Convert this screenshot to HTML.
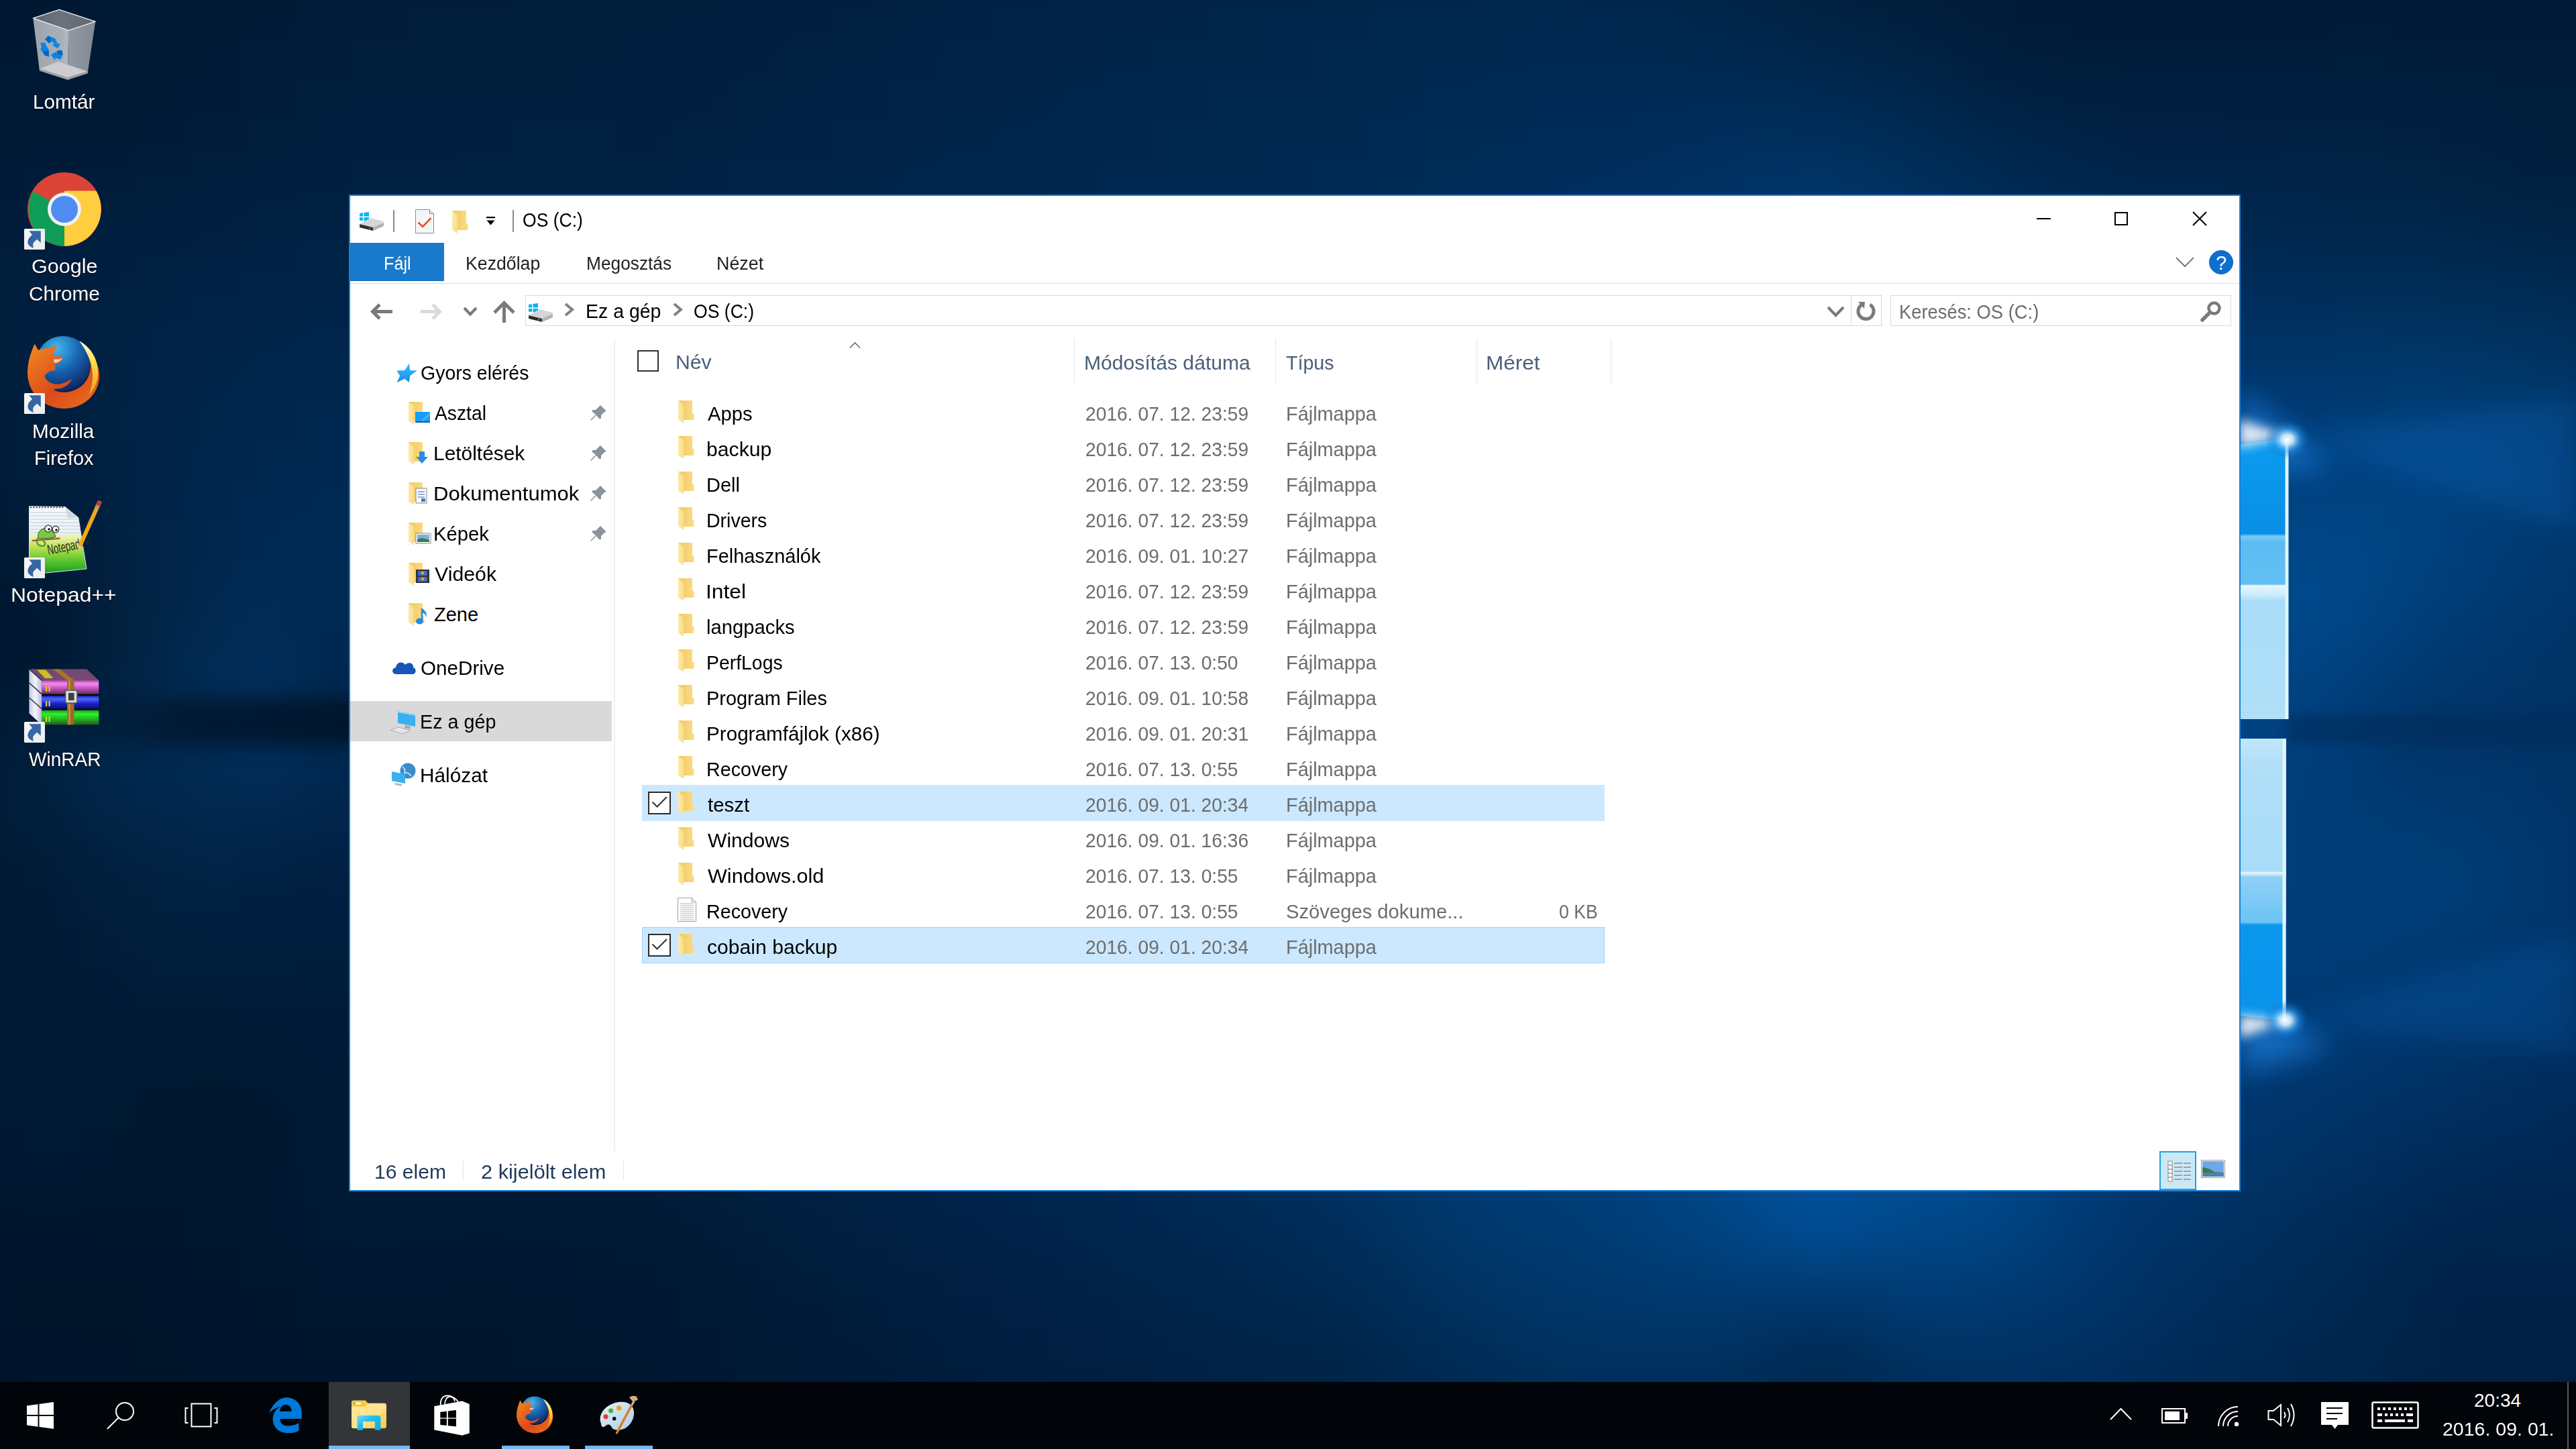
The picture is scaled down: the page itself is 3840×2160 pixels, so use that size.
<!DOCTYPE html><html><head><meta charset="utf-8"><style>html,body{margin:0;padding:0;width:3840px;height:2160px;overflow:hidden;}body{position:relative;background:#012550;font-family:"Liberation Sans", sans-serif;}.t{position:absolute;white-space:nowrap;font-family:"Liberation Sans",sans-serif;}svg{overflow:visible}</style></head><body>
<div style="position:absolute;left:-80px;top:-60px;width:4000px;height:2180px;filter:blur(30px)"><div style="position:absolute;left:0px;top:0px;width:4000px;height:60px;background:linear-gradient(90deg,#001731 0px,#001832 80px,#001832 160px,#001933 240px,#001934 320px,#001a35 400px,#001a36 480px,#001b37 560px,#001b38 640px,#001c38 720px,#001c39 800px,#001d3a 880px,#001d3a 960px,#001d3b 1040px,#001e3c 1120px,#001e3d 1200px,#001f3f 1280px,#001f40 1360px,#002041 1440px,#002042 1520px,#002143 1600px,#002244 1680px,#002245 1760px,#002346 1840px,#002447 1920px,#002448 2000px,#002549 2080px,#00254b 2160px,#00264c 2240px,#00264d 2320px,#00264d 2400px,#00264b 2480px,#002549 2560px,#002347 2640px,#002243 2720px,#001f3e 2800px,#001e3b 2880px,#001c39 2960px,#001b37 3040px,#001a36 3120px,#001936 3200px,#001936 3280px,#001936 3360px,#001936 3440px,#001a37 3520px,#001a37 3600px,#001a37 3680px,#001a37 3760px,#001a37 3840px,#001a37 3920px,#001a37 4000px)"></div><div style="position:absolute;left:0px;top:60px;width:4000px;height:60px;background:linear-gradient(90deg,#001832 0px,#001832 80px,#001933 160px,#001934 240px,#001935 320px,#001a36 400px,#001b37 480px,#001c38 560px,#001c39 640px,#001d3a 720px,#001d3a 800px,#001d3b 880px,#001d3b 960px,#001e3c 1040px,#001e3d 1120px,#001f3f 1200px,#001f40 1280px,#002041 1360px,#002043 1440px,#002144 1520px,#002245 1600px,#002246 1680px,#002347 1760px,#002448 1840px,#002549 1920px,#00254a 2000px,#00264b 2080px,#00274d 2160px,#00274e 2240px,#00284f 2320px,#002850 2400px,#00274f 2480px,#00274d 2560px,#00264b 2640px,#002448 2720px,#002243 2800px,#002040 2880px,#001e3d 2960px,#001c3a 3040px,#001b38 3120px,#001b38 3200px,#001b38 3280px,#001b39 3360px,#001b39 3440px,#001b39 3520px,#001b39 3600px,#001b39 3680px,#001b39 3760px,#001b39 3840px,#001b39 3920px,#001b39 4000px)"></div><div style="position:absolute;left:0px;top:120px;width:4000px;height:60px;background:linear-gradient(90deg,#001833 0px,#001933 80px,#001934 160px,#001934 240px,#001a35 320px,#001b37 400px,#001c39 480px,#001c3a 560px,#001d3b 640px,#001d3b 720px,#001e3c 800px,#001e3c 880px,#001e3d 960px,#001e3e 1040px,#001f3f 1120px,#001f40 1200px,#002042 1280px,#002143 1360px,#002144 1440px,#002245 1520px,#002247 1600px,#002348 1680px,#002449 1760px,#00254a 1840px,#00264b 1920px,#00264c 2000px,#00274d 2080px,#00284f 2160px,#002850 2240px,#002952 2320px,#002952 2400px,#002952 2480px,#002952 2560px,#002851 2640px,#00274e 2720px,#00264b 2800px,#002447 2880px,#002243 2960px,#001e3e 3040px,#001d3b 3120px,#001c3c 3200px,#001c3c 3280px,#001c3c 3360px,#001c3c 3440px,#001c3c 3520px,#001d3c 3600px,#001c3c 3680px,#001c3b 3760px,#001c3a 3840px,#001c3a 3920px,#001c3a 4000px)"></div><div style="position:absolute;left:0px;top:180px;width:4000px;height:60px;background:linear-gradient(90deg,#001934 0px,#001935 80px,#001a35 160px,#001a35 240px,#001a36 320px,#001b38 400px,#001c3a 480px,#001d3c 560px,#001e3d 640px,#001e3d 720px,#001f3e 800px,#001f3e 880px,#001f3e 960px,#001f3f 1040px,#001f40 1120px,#002042 1200px,#002143 1280px,#002145 1360px,#002246 1440px,#002347 1520px,#002348 1600px,#00244a 1680px,#00254b 1760px,#00264c 1840px,#00274d 1920px,#00274e 2000px,#00284f 2080px,#002951 2160px,#002a53 2240px,#002a54 2320px,#002a55 2400px,#002a55 2480px,#002b56 2560px,#002b57 2640px,#002b56 2720px,#002a54 2800px,#002850 2880px,#00264b 2960px,#002245 3040px,#002041 3120px,#001f40 3200px,#001e40 3280px,#001e3f 3360px,#001e3f 3440px,#001e3f 3520px,#001e3f 3600px,#001e3e 3680px,#001e3d 3760px,#001d3c 3840px,#001d3b 3920px,#001d3c 4000px)"></div><div style="position:absolute;left:0px;top:240px;width:4000px;height:60px;background:linear-gradient(90deg,#001935 0px,#001a36 80px,#001a37 160px,#001a37 240px,#001b38 320px,#001c3a 400px,#001d3c 480px,#001e3e 560px,#001f3f 640px,#001f3f 720px,#001f40 800px,#002040 880px,#002040 960px,#001f40 1040px,#002042 1120px,#002143 1200px,#002145 1280px,#002246 1360px,#002348 1440px,#002449 1520px,#00244a 1600px,#00254c 1680px,#00264d 1760px,#00274e 1840px,#00284f 1920px,#002850 2000px,#002951 2080px,#002a53 2160px,#002b55 2240px,#002b57 2320px,#002c58 2400px,#002c59 2480px,#002d5b 2560px,#002e5d 2640px,#002f5e 2720px,#002f5d 2800px,#002d58 2880px,#002a53 2960px,#00274d 3040px,#002449 3120px,#002246 3200px,#002044 3280px,#002044 3360px,#002043 3440px,#002143 3520px,#002142 3600px,#002041 3680px,#001f40 3760px,#001e3d 3840px,#001e3d 3920px,#001e3e 4000px)"></div><div style="position:absolute;left:0px;top:300px;width:4000px;height:60px;background:linear-gradient(90deg,#001a36 0px,#001b38 80px,#001c39 160px,#001c3a 240px,#001d3b 320px,#001e3d 400px,#001f3f 480px,#001f40 560px,#002041 640px,#002042 720px,#002042 800px,#002142 880px,#002142 960px,#002042 1040px,#002143 1120px,#002245 1200px,#002247 1280px,#002348 1360px,#00244a 1440px,#00254b 1520px,#00254c 1600px,#00264e 1680px,#00274f 1760px,#002850 1840px,#002951 1920px,#002952 2000px,#002a52 2080px,#002b55 2160px,#002c57 2240px,#002d59 2320px,#002d5b 2400px,#002e5d 2480px,#002f5f 2560px,#003162 2640px,#003265 2720px,#003366 2800px,#003160 2880px,#002e5b 2960px,#002b55 3040px,#002750 3120px,#00254c 3200px,#002349 3280px,#002349 3360px,#002348 3440px,#002348 3520px,#002346 3600px,#002345 3680px,#002243 3760px,#002040 3840px,#00203f 3920px,#002041 4000px)"></div><div style="position:absolute;left:0px;top:360px;width:4000px;height:60px;background:linear-gradient(90deg,#001b37 0px,#001c3a 80px,#001d3c 160px,#001e3d 240px,#001e3e 320px,#001f40 400px,#002042 480px,#002143 560px,#002144 640px,#002144 720px,#002245 800px,#002245 880px,#002245 960px,#002245 1040px,#002246 1120px,#002347 1200px,#002449 1280px,#00244a 1360px,#00254c 1440px,#00264d 1520px,#00264e 1600px,#002750 1680px,#002851 1760px,#002952 1840px,#002a53 1920px,#002b54 2000px,#002b55 2080px,#002c57 2160px,#002d5a 2240px,#002e5c 2320px,#002f5e 2400px,#003060 2480px,#003163 2560px,#003366 2640px,#003468 2720px,#003569 2800px,#003365 2880px,#003160 2960px,#002e5b 3040px,#002b57 3120px,#002953 3200px,#002751 3280px,#00274f 3360px,#00274e 3440px,#00264d 3520px,#00264b 3600px,#00264b 3680px,#002549 3760px,#002345 3840px,#002344 3920px,#002345 4000px)"></div><div style="position:absolute;left:0px;top:420px;width:4000px;height:60px;background:linear-gradient(90deg,#001b38 0px,#001d3b 80px,#001e3f 160px,#001f40 240px,#002041 320px,#002043 400px,#002144 480px,#002246 560px,#002246 640px,#002347 720px,#002347 800px,#002347 880px,#002348 960px,#002348 1040px,#002349 1120px,#00244a 1200px,#00254b 1280px,#00254d 1360px,#00264e 1440px,#00274f 1520px,#002751 1600px,#002852 1680px,#002953 1760px,#002a54 1840px,#002b55 1920px,#002c57 2000px,#002d58 2080px,#002d5a 2160px,#002e5c 2240px,#002f5f 2320px,#003061 2400px,#003263 2480px,#003366 2560px,#003468 2640px,#00356a 2720px,#00366a 2800px,#003568 2880px,#003364 2960px,#003161 3040px,#002e5d 3120px,#002c5a 3200px,#002b58 3280px,#002b57 3360px,#002a55 3440px,#002a53 3520px,#002a51 3600px,#002a52 3680px,#002950 3760px,#00284e 3840px,#00274c 3920px,#00264b 4000px)"></div><div style="position:absolute;left:0px;top:480px;width:4000px;height:60px;background:linear-gradient(90deg,#001b39 0px,#001d3c 80px,#001f3f 160px,#002041 240px,#002143 320px,#002245 400px,#002347 480px,#002348 560px,#002449 640px,#002449 720px,#00244a 800px,#00244a 880px,#00244a 960px,#00254b 1040px,#00254c 1120px,#00254d 1200px,#00264e 1280px,#00274f 1360px,#002750 1440px,#002851 1520px,#002953 1600px,#002954 1680px,#002a55 1760px,#002b57 1840px,#002c58 1920px,#002d59 2000px,#002e5b 2080px,#002f5d 2160px,#00305f 2240px,#003161 2320px,#003263 2400px,#003366 2480px,#003468 2560px,#00356a 2640px,#00366c 2720px,#00366c 2800px,#00366a 2880px,#003568 2960px,#003365 3040px,#003163 3120px,#003061 3200px,#002f5f 3280px,#002f5e 3360px,#002e5d 3440px,#002e5c 3520px,#002e5a 3600px,#002f5a 3680px,#002e59 3760px,#002d57 3840px,#002c54 3920px,#002a52 4000px)"></div><div style="position:absolute;left:0px;top:540px;width:4000px;height:60px;background:linear-gradient(90deg,#001b38 0px,#001d3c 80px,#001f3f 160px,#002042 240px,#002245 320px,#002347 400px,#002449 480px,#00244a 560px,#00254b 640px,#00254c 720px,#00254c 800px,#00254c 880px,#00264d 960px,#00264d 1040px,#00264e 1120px,#00274f 1200px,#002750 1280px,#002851 1360px,#002852 1440px,#002953 1520px,#002a55 1600px,#002a56 1680px,#002b57 1760px,#002c59 1840px,#002d5a 1920px,#002e5c 2000px,#002f5d 2080px,#00305f 2160px,#003161 2240px,#003263 2320px,#003366 2400px,#003468 2480px,#00356a 2560px,#00366c 2640px,#00376d 2720px,#00376d 2800px,#00376c 2880px,#00366b 2960px,#003569 3040px,#003468 3120px,#003467 3200px,#003366 3280px,#003366 3360px,#003365 3440px,#003365 3520px,#003465 3600px,#003464 3680px,#003363 3760px,#003260 3840px,#00305d 3920px,#002e59 4000px)"></div><div style="position:absolute;left:0px;top:600px;width:4000px;height:60px;background:linear-gradient(90deg,#001b38 0px,#001d3b 80px,#001f3f 160px,#002142 240px,#002246 320px,#002449 400px,#00254b 480px,#00264d 560px,#00264d 640px,#00264e 720px,#00264e 800px,#00274f 880px,#00274f 960px,#002750 1040px,#002851 1120px,#002851 1200px,#002852 1280px,#002953 1360px,#002954 1440px,#002a55 1520px,#002a57 1600px,#002b58 1680px,#002c59 1760px,#002d5b 1840px,#002e5c 1920px,#002f5e 2000px,#003060 2080px,#003162 2160px,#003263 2240px,#003365 2320px,#003468 2400px,#00356a 2480px,#00366c 2560px,#00376d 2640px,#00386e 2720px,#00386f 2800px,#00386e 2880px,#00386e 2960px,#00376d 3040px,#00376d 3120px,#00376c 3200px,#00376c 3280px,#00376d 3360px,#00376e 3440px,#00376e 3520px,#00386e 3600px,#00396d 3680px,#00386c 3760px,#00376a 3840px,#003465 3920px,#00315f 4000px)"></div><div style="position:absolute;left:0px;top:660px;width:4000px;height:60px;background:linear-gradient(90deg,#001b37 0px,#001c3a 80px,#001e3e 160px,#002142 240px,#002346 320px,#00254a 400px,#00264d 480px,#00274f 560px,#00274f 640px,#002750 720px,#002750 800px,#002851 880px,#002851 960px,#002852 1040px,#002953 1120px,#002953 1200px,#002954 1280px,#002a55 1360px,#002a56 1440px,#002b57 1520px,#002b59 1600px,#002c5a 1680px,#002d5b 1760px,#002e5d 1840px,#002f5f 1920px,#003060 2000px,#003062 2080px,#003164 2160px,#003366 2240px,#003467 2320px,#003569 2400px,#00366b 2480px,#00376d 2560px,#00386f 2640px,#003870 2720px,#003970 2800px,#003970 2880px,#003970 2960px,#003971 3040px,#003971 3120px,#003a72 3200px,#003a72 3280px,#003b74 3360px,#003b75 3440px,#003c76 3520px,#003d76 3600px,#003d76 3680px,#003c74 3760px,#003a70 3840px,#00376a 3920px,#003363 4000px)"></div><div style="position:absolute;left:0px;top:720px;width:4000px;height:60px;background:linear-gradient(90deg,#001a36 0px,#001c39 80px,#001e3d 160px,#002042 240px,#002347 320px,#00254b 400px,#00274f 480px,#002851 560px,#002851 640px,#002851 720px,#002852 800px,#002852 880px,#002953 960px,#002954 1040px,#002a55 1120px,#002a55 1200px,#002a56 1280px,#002a57 1360px,#002b58 1440px,#002b59 1520px,#002c5a 1600px,#002d5c 1680px,#002e5d 1760px,#002e5f 1840px,#002f61 1920px,#003062 2000px,#003164 2080px,#003266 2160px,#003367 2240px,#003469 2320px,#00356b 2400px,#00376d 2480px,#00376e 2560px,#003870 2640px,#003971 2720px,#003a72 2800px,#003a72 2880px,#003a73 2960px,#003b74 3040px,#003c75 3120px,#003c76 3200px,#003d78 3280px,#003e7a 3360px,#003f7b 3440px,#00407d 3520px,#00407d 3600px,#00407d 3680px,#003f7a 3760px,#003c73 3840px,#00386d 3920px,#003466 4000px)"></div><div style="position:absolute;left:0px;top:780px;width:4000px;height:60px;background:linear-gradient(90deg,#001a34 0px,#001b37 80px,#001d3b 160px,#002041 240px,#002347 320px,#00264d 400px,#002851 480px,#002953 560px,#002953 640px,#002853 720px,#002853 800px,#002953 880px,#002954 960px,#002a55 1040px,#002a56 1120px,#002b56 1200px,#002b57 1280px,#002b58 1360px,#002c59 1440px,#002c5a 1520px,#002d5c 1600px,#002e5d 1680px,#002e5f 1760px,#002f61 1840px,#003062 1920px,#003164 2000px,#003266 2080px,#003367 2160px,#003469 2240px,#00356b 2320px,#00366c 2400px,#00376e 2480px,#003870 2560px,#003971 2640px,#003a72 2720px,#003a73 2800px,#003b74 2880px,#003c75 2960px,#003d77 3040px,#003d78 3120px,#003e7a 3200px,#00407c 3280px,#00417f 3360px,#004281 3440px,#004382 3520px,#004382 3600px,#004280 3680px,#00407b 3760px,#003c74 3840px,#00386d 3920px,#003467 4000px)"></div><div style="position:absolute;left:0px;top:840px;width:4000px;height:60px;background:linear-gradient(90deg,#001933 0px,#001a35 80px,#001c39 160px,#00203f 240px,#012447 320px,#01274e 400px,#002953 480px,#002a55 560px,#002954 640px,#002953 720px,#002953 800px,#002954 880px,#002a55 960px,#002a56 1040px,#002b57 1120px,#002b57 1200px,#002b58 1280px,#002c59 1360px,#002c5a 1440px,#002d5c 1520px,#002d5d 1600px,#002e5f 1680px,#002f61 1760px,#003062 1840px,#003164 1920px,#003266 2000px,#003367 2080px,#003469 2160px,#00356b 2240px,#00366c 2320px,#00376e 2400px,#00386f 2480px,#003971 2560px,#003a72 2640px,#003a74 2720px,#003b75 2800px,#003c76 2880px,#003d78 2960px,#003e79 3040px,#003f7b 3120px,#00407d 3200px,#004280 3280px,#004383 3360px,#004586 3440px,#004688 3520px,#004585 3600px,#004280 3680px,#003e7a 3760px,#003b73 3840px,#00376c 3920px,#003467 4000px)"></div><div style="position:absolute;left:0px;top:900px;width:4000px;height:60px;background:linear-gradient(90deg,#001831 0px,#001933 80px,#001b36 160px,#011f3e 240px,#012447 320px,#012850 400px,#012a54 480px,#002a54 560px,#002953 640px,#002953 720px,#002953 800px,#002954 880px,#002a55 960px,#002a56 1040px,#002b57 1120px,#002b58 1200px,#002c59 1280px,#002c5a 1360px,#002d5b 1440px,#002d5d 1520px,#002e5e 1600px,#002f60 1680px,#003062 1760px,#003064 1840px,#003166 1920px,#003267 2000px,#003369 2080px,#00346a 2160px,#00356c 2240px,#00366d 2320px,#00376f 2400px,#003870 2480px,#003972 2560px,#003a73 2640px,#003b75 2720px,#003c76 2800px,#003d78 2880px,#003e79 2960px,#003f7b 3040px,#00407d 3120px,#004280 3200px,#004382 3280px,#004585 3360px,#004789 3440px,#00498c 3520px,#004586 3600px,#00417e 3680px,#003d77 3760px,#003970 3840px,#00366b 3920px,#003366 4000px)"></div><div style="position:absolute;left:0px;top:960px;width:4000px;height:60px;background:linear-gradient(90deg,#001830 0px,#001831 80px,#001933 160px,#011f3c 240px,#012548 320px,#022a52 400px,#022c56 480px,#002953 560px,#002852 640px,#002852 720px,#002853 800px,#002954 880px,#002955 960px,#002a56 1040px,#002b57 1120px,#002b58 1200px,#002c59 1280px,#002c5b 1360px,#002d5c 1440px,#002e5e 1520px,#002e5f 1600px,#002f61 1680px,#003063 1760px,#003165 1840px,#003267 1920px,#003369 2000px,#00346a 2080px,#00356c 2160px,#00366d 2240px,#00376e 2320px,#003870 2400px,#003971 2480px,#003a73 2560px,#003b74 2640px,#003c76 2720px,#003d77 2800px,#003e79 2880px,#003f7b 2960px,#00407d 3040px,#00417f 3120px,#004281 3200px,#004484 3280px,#004586 3360px,#004789 3440px,#00488b 3520px,#004483 3600px,#003e7a 3680px,#003a72 3760px,#00376d 3840px,#003468 3920px,#003365 4000px)"></div><div style="position:absolute;left:0px;top:1020px;width:4000px;height:60px;background:linear-gradient(90deg,#001831 0px,#001831 80px,#001831 160px,#011f3d 240px,#01264a 320px,#022c55 400px,#03305c 480px,#00274f 560px,#002751 640px,#002851 720px,#002852 800px,#002853 880px,#002954 960px,#002a55 1040px,#002b57 1120px,#002b58 1200px,#002c5a 1280px,#002d5b 1360px,#002d5d 1440px,#002e5e 1520px,#002f60 1600px,#002f62 1680px,#003064 1760px,#003166 1840px,#003268 1920px,#00336a 2000px,#00346b 2080px,#00356c 2160px,#00366e 2240px,#00376f 2320px,#003870 2400px,#003972 2480px,#003a73 2560px,#003b75 2640px,#003c77 2720px,#003d78 2800px,#003e7a 2880px,#003f7c 2960px,#00417e 3040px,#004280 3120px,#004382 3200px,#004484 3280px,#004586 3360px,#004586 3440px,#004484 3520px,#00407d 3600px,#003b74 3680px,#00376e 3760px,#003569 3840px,#003366 3920px,#003263 4000px)"></div><div style="position:absolute;left:0px;top:1080px;width:4000px;height:60px;background:linear-gradient(90deg,#001831 0px,#001a34 80px,#001c38 160px,#012243 240px,#02284e 320px,#022c56 400px,#022d58 480px,#002851 560px,#002750 640px,#002750 720px,#002751 800px,#002852 880px,#002953 960px,#002955 1040px,#002a56 1120px,#002b58 1200px,#002c5a 1280px,#002d5b 1360px,#002d5d 1440px,#002e5e 1520px,#002f60 1600px,#003062 1680px,#003064 1760px,#003166 1840px,#003268 1920px,#00336a 2000px,#00346c 2080px,#00366d 2160px,#00376e 2240px,#003770 2320px,#003871 2400px,#003972 2480px,#003a74 2560px,#003b75 2640px,#003c77 2720px,#003e79 2800px,#003f7b 2880px,#00407d 2960px,#00417f 3040px,#004281 3120px,#004383 3200px,#004484 3280px,#004484 3360px,#004383 3440px,#00417f 3520px,#003c76 3600px,#00376c 3680px,#00356a 3760px,#003467 3840px,#003265 3920px,#003163 4000px)"></div><div style="position:absolute;left:0px;top:1140px;width:4000px;height:60px;background:linear-gradient(90deg,#001933 0px,#001b37 80px,#00203f 160px,#01264b 240px,#022950 320px,#022c56 400px,#022d59 480px,#012953 560px,#002750 640px,#00264f 720px,#00274f 800px,#002751 880px,#002852 960px,#002954 1040px,#002a56 1120px,#002b58 1200px,#002c59 1280px,#002d5b 1360px,#002d5d 1440px,#002e5e 1520px,#002f60 1600px,#003062 1680px,#003164 1760px,#003266 1840px,#003368 1920px,#00346a 2000px,#00356c 2080px,#00366d 2160px,#00376f 2240px,#003870 2320px,#003971 2400px,#003a73 2480px,#003a74 2560px,#003b76 2640px,#003d78 2720px,#003e7a 2800px,#003f7c 2880px,#00407e 2960px,#004180 3040px,#004281 3120px,#004383 3200px,#004383 3280px,#004382 3360px,#004280 3440px,#003f7b 3520px,#003a73 3600px,#003467 3680px,#003569 3760px,#003468 3840px,#003365 3920px,#003163 4000px)"></div><div style="position:absolute;left:0px;top:1200px;width:4000px;height:60px;background:linear-gradient(90deg,#001a34 0px,#001c38 80px,#002141 160px,#01274c 240px,#01284f 320px,#022a53 400px,#022c56 480px,#012850 560px,#00264d 640px,#00254d 720px,#00264e 800px,#00274f 880px,#002751 960px,#002953 1040px,#002a55 1120px,#002b57 1200px,#002c59 1280px,#002d5b 1360px,#002d5d 1440px,#002e5e 1520px,#002f60 1600px,#003062 1680px,#003164 1760px,#003266 1840px,#003368 1920px,#00346a 2000px,#00356c 2080px,#00366e 2160px,#00376f 2240px,#003870 2320px,#003972 2400px,#003a73 2480px,#003b74 2560px,#003c76 2640px,#003d78 2720px,#003e7a 2800px,#003f7c 2880px,#00417f 2960px,#004280 3040px,#004282 3120px,#004382 3200px,#004382 3280px,#004281 3360px,#00417f 3440px,#003e7a 3520px,#003b74 3600px,#00386e 3680px,#00376c 3760px,#00356a 3840px,#003367 3920px,#003163 4000px)"></div><div style="position:absolute;left:0px;top:1260px;width:4000px;height:60px;background:linear-gradient(90deg,#001a34 0px,#001c38 80px,#001f3d 160px,#012345 240px,#01264a 320px,#01274c 400px,#01264d 480px,#01244a 560px,#002449 640px,#00244a 720px,#00254b 800px,#00264d 880px,#00274f 960px,#002852 1040px,#002954 1120px,#002a56 1200px,#002b59 1280px,#002c5a 1360px,#002d5c 1440px,#002e5e 1520px,#002f60 1600px,#002f61 1680px,#003063 1760px,#003166 1840px,#003368 1920px,#00346a 2000px,#00356c 2080px,#00366e 2160px,#00376f 2240px,#003871 2320px,#003972 2400px,#003a73 2480px,#003b74 2560px,#003b75 2640px,#003d78 2720px,#003e7a 2800px,#00407d 2880px,#00417f 2960px,#004281 3040px,#004282 3120px,#004382 3200px,#004282 3280px,#004180 3360px,#00407e 3440px,#003e7a 3520px,#003c76 3600px,#003b74 3680px,#003a71 3760px,#00376c 3840px,#003468 3920px,#003264 4000px)"></div><div style="position:absolute;left:0px;top:1320px;width:4000px;height:60px;background:linear-gradient(90deg,#001933 0px,#001b36 80px,#001c38 160px,#00203f 240px,#012244 320px,#012346 400px,#002245 480px,#002042 560px,#002145 640px,#002247 720px,#002349 800px,#00254b 880px,#00264d 960px,#002750 1040px,#002953 1120px,#002a56 1200px,#002b58 1280px,#002c5a 1360px,#002d5c 1440px,#002d5d 1520px,#002e5f 1600px,#002f61 1680px,#003063 1760px,#003165 1840px,#003267 1920px,#003469 2000px,#00356c 2080px,#00366e 2160px,#00376f 2240px,#003871 2320px,#003972 2400px,#003a73 2480px,#003a74 2560px,#003b75 2640px,#003d77 2720px,#003e7a 2800px,#00407e 2880px,#004180 2960px,#004282 3040px,#004382 3120px,#004282 3200px,#004281 3280px,#00417f 3360px,#00407d 3440px,#003e7a 3520px,#003d78 3600px,#003e78 3680px,#003d76 3760px,#00386e 3840px,#003468 3920px,#003164 4000px)"></div><div style="position:absolute;left:0px;top:1380px;width:4000px;height:60px;background:linear-gradient(90deg,#001933 0px,#001a35 80px,#001b37 160px,#001e3b 240px,#00203f 320px,#002041 400px,#001f40 480px,#001e3f 560px,#001f41 640px,#002144 720px,#002246 800px,#002349 880px,#00254b 960px,#00264e 1040px,#002851 1120px,#002a54 1200px,#002b57 1280px,#002c59 1360px,#002c5b 1440px,#002d5c 1520px,#002e5e 1600px,#002f5f 1680px,#003062 1760px,#003164 1840px,#003266 1920px,#003469 2000px,#00356b 2080px,#00366d 2160px,#00386f 2240px,#003971 2320px,#003a72 2400px,#003a73 2480px,#003a73 2560px,#003b74 2640px,#003c77 2720px,#003f7b 2800px,#00417e 2880px,#004281 2960px,#004382 3040px,#004382 3120px,#004282 3200px,#004180 3280px,#00407e 3360px,#003f7c 3440px,#003e7a 3520px,#003d78 3600px,#003d78 3680px,#003c75 3760px,#00386e 3840px,#003468 3920px,#003163 4000px)"></div><div style="position:absolute;left:0px;top:1440px;width:4000px;height:60px;background:linear-gradient(90deg,#001932 0px,#001a34 80px,#001b36 160px,#001c39 240px,#001e3b 320px,#001e3d 400px,#001e3c 480px,#001d3d 560px,#001e3f 640px,#001f41 720px,#002144 800px,#002246 880px,#002449 960px,#00254c 1040px,#002750 1120px,#002953 1200px,#002b56 1280px,#002b58 1360px,#002c59 1440px,#002c5b 1520px,#002d5c 1600px,#002e5e 1680px,#002f60 1760px,#003063 1840px,#003265 1920px,#003368 2000px,#00356a 2080px,#00376d 2160px,#00386f 2240px,#003971 2320px,#003a73 2400px,#003a73 2480px,#003a73 2560px,#003b73 2640px,#003c76 2720px,#003f7b 2800px,#004180 2880px,#004383 2960px,#004383 3040px,#004383 3120px,#004281 3200px,#00407f 3280px,#003f7d 3360px,#003e7a 3440px,#003d78 3520px,#003c76 3600px,#003b74 3680px,#003971 3760px,#00366c 3840px,#003366 3920px,#003061 4000px)"></div><div style="position:absolute;left:0px;top:1500px;width:4000px;height:60px;background:linear-gradient(90deg,#001832 0px,#001934 80px,#001a36 160px,#001b37 240px,#001c38 320px,#001c39 400px,#001c3a 480px,#001c3b 560px,#001d3c 640px,#001e3f 720px,#002041 800px,#002144 880px,#002247 960px,#00244a 1040px,#00264d 1120px,#002851 1200px,#002a55 1280px,#002b57 1360px,#002b58 1440px,#002b59 1520px,#002c5a 1600px,#002d5c 1680px,#002e5e 1760px,#003061 1840px,#003164 1920px,#003367 2000px,#00356a 2080px,#00376d 2160px,#00386f 2240px,#003a72 2320px,#003b73 2400px,#003b74 2480px,#003b74 2560px,#003a73 2640px,#003c76 2720px,#00407d 2800px,#004382 2880px,#004485 2960px,#004485 3040px,#004383 3120px,#004181 3200px,#00407e 3280px,#003e7b 3360px,#003c78 3440px,#003b75 3520px,#003a73 3600px,#003871 3680px,#00366d 3760px,#003468 3840px,#003164 3920px,#002f5f 4000px)"></div><div style="position:absolute;left:0px;top:1560px;width:4000px;height:60px;background:linear-gradient(90deg,#001832 0px,#001934 80px,#001a35 160px,#001b36 240px,#001b36 320px,#001b36 400px,#001b37 480px,#001b38 560px,#001c3b 640px,#001d3d 720px,#001e3f 800px,#002041 880px,#002144 960px,#002347 1040px,#00254a 1120px,#00274f 1200px,#002953 1280px,#002954 1360px,#002a55 1440px,#002a56 1520px,#002b58 1600px,#002c5a 1680px,#002d5c 1760px,#002f5f 1840px,#003062 1920px,#003265 2000px,#003469 2080px,#00376c 2160px,#003870 2240px,#003a72 2320px,#003b74 2400px,#003c76 2480px,#003c76 2560px,#003c76 2640px,#003e7a 2720px,#004281 2800px,#004586 2880px,#004587 2960px,#004586 3040px,#004384 3120px,#004180 3200px,#003f7c 3280px,#003c78 3360px,#003b75 3440px,#003972 3520px,#00376f 3600px,#00356c 3680px,#003469 3760px,#003165 3840px,#002f60 3920px,#002d5d 4000px)"></div><div style="position:absolute;left:0px;top:1620px;width:4000px;height:60px;background:linear-gradient(90deg,#001832 0px,#001934 80px,#001a35 160px,#001a35 240px,#001a34 320px,#001a33 400px,#001a35 480px,#001a37 560px,#001b39 640px,#001c3b 720px,#001d3d 800px,#001e3e 880px,#002041 960px,#002143 1040px,#002347 1120px,#00254b 1200px,#00264e 1280px,#002751 1360px,#002852 1440px,#002954 1520px,#002955 1600px,#002b58 1680px,#002c5a 1760px,#002e5d 1840px,#002f60 1920px,#003263 2000px,#003467 2080px,#00366c 2160px,#003970 2240px,#003b73 2320px,#003c76 2400px,#003d78 2480px,#003f7a 2560px,#00407d 2640px,#004282 2720px,#004687 2800px,#00478a 2880px,#00478a 2960px,#004688 3040px,#004384 3120px,#00407f 3200px,#003d7a 3280px,#003b75 3360px,#003872 3440px,#00366e 3520px,#00356b 3600px,#003368 3680px,#003164 3760px,#002f60 3840px,#002c5d 3920px,#002b5a 4000px)"></div><div style="position:absolute;left:0px;top:1680px;width:4000px;height:60px;background:linear-gradient(90deg,#001732 0px,#001934 80px,#001a35 160px,#001a34 240px,#001931 320px,#001830 400px,#001932 480px,#001a35 560px,#001b38 640px,#001c39 720px,#001c3a 800px,#001d3c 880px,#001e3d 960px,#001f40 1040px,#002143 1120px,#002347 1200px,#00244a 1280px,#00254d 1360px,#00264f 1440px,#002751 1520px,#002853 1600px,#002955 1680px,#002a57 1760px,#002c5a 1840px,#002e5d 1920px,#003161 2000px,#003366 2080px,#00366a 2160px,#00396f 2240px,#003b73 2320px,#003d77 2400px,#003f7a 2480px,#00417e 2560px,#004383 2640px,#004789 2720px,#00498e 2800px,#004a8f 2880px,#00498d 2960px,#004789 3040px,#004384 3120px,#003f7d 3200px,#003b77 3280px,#003872 3360px,#00366d 3440px,#00346a 3520px,#003267 3600px,#003063 3680px,#002e5f 3760px,#002c5c 3840px,#002a59 3920px,#002956 4000px)"></div><div style="position:absolute;left:0px;top:1740px;width:4000px;height:60px;background:linear-gradient(90deg,#001731 0px,#001833 80px,#001935 160px,#001932 240px,#00182f 320px,#00172d 400px,#001931 480px,#001a35 560px,#001a37 640px,#001b37 720px,#001b38 800px,#001c39 880px,#001c3a 960px,#001d3c 1040px,#001f3f 1120px,#002042 1200px,#002246 1280px,#002349 1360px,#00244b 1440px,#00254d 1520px,#00264f 1600px,#002752 1680px,#002954 1760px,#002b57 1840px,#002d5a 1920px,#002f5e 2000px,#003263 2080px,#003569 2160px,#00396f 2240px,#003b73 2320px,#003d77 2400px,#003f7b 2480px,#004280 2560px,#004687 2640px,#004a90 2720px,#004d95 2800px,#004c93 2880px,#004a8f 2960px,#00478a 3040px,#004383 3120px,#003d7a 3200px,#003973 3280px,#00366d 3360px,#003469 3440px,#003265 3520px,#002f62 3600px,#002d5d 3680px,#002b5a 3760px,#002957 3840px,#002855 3920px,#002753 4000px)"></div><div style="position:absolute;left:0px;top:1800px;width:4000px;height:60px;background:linear-gradient(90deg,#00162f 0px,#001731 80px,#001831 160px,#001730 240px,#00172e 320px,#00172d 400px,#001831 480px,#001a35 560px,#001a36 640px,#001a36 720px,#001a36 800px,#001b36 880px,#001b37 960px,#001b38 1040px,#001d3a 1120px,#001e3e 1200px,#002042 1280px,#002145 1360px,#002248 1440px,#00234a 1520px,#00244c 1600px,#00264e 1680px,#002751 1760px,#002954 1840px,#002b57 1920px,#002e5b 2000px,#003160 2080px,#003466 2160px,#00386d 2240px,#003b73 2320px,#003d76 2400px,#003f7a 2480px,#004280 2560px,#004687 2640px,#004c93 2720px,#00509b 2800px,#004c93 2880px,#004a8e 2960px,#00488a 3040px,#004180 3120px,#003b76 3200px,#00366e 3280px,#003368 3360px,#003263 3440px,#00305f 3520px,#002d5c 3600px,#002a58 3680px,#002854 3760px,#002752 3840px,#002651 3920px,#00254f 4000px)"></div><div style="position:absolute;left:0px;top:1860px;width:4000px;height:60px;background:linear-gradient(90deg,#00152e 0px,#00162e 80px,#00162e 160px,#00162d 240px,#00162d 320px,#00172e 400px,#001830 480px,#001934 560px,#001935 640px,#001934 720px,#001934 800px,#001934 880px,#001a34 960px,#001a35 1040px,#001b37 1120px,#001d3b 1200px,#001e3f 1280px,#001f42 1360px,#002044 1440px,#002147 1520px,#002249 1600px,#00244b 1680px,#00254e 1760px,#002750 1840px,#002953 1920px,#002b57 2000px,#002e5c 2080px,#003262 2160px,#00376a 2240px,#003a70 2320px,#003b72 2400px,#003d77 2480px,#00407c 2560px,#004382 2640px,#00498d 2720px,#004d95 2800px,#00498c 2880px,#004788 2960px,#004585 3040px,#003f7b 3120px,#003872 3200px,#003369 3280px,#003164 3360px,#00305f 3440px,#002d5a 3520px,#002a56 3600px,#002752 3680px,#00254e 3760px,#00254d 3840px,#00244d 3920px,#00244c 4000px)"></div><div style="position:absolute;left:0px;top:1920px;width:4000px;height:60px;background:linear-gradient(90deg,#00142c 0px,#00142c 80px,#00142b 160px,#00152b 240px,#00152c 320px,#00162d 400px,#00172f 480px,#001832 560px,#001832 640px,#001832 720px,#001831 800px,#001832 880px,#001932 960px,#001933 1040px,#001a35 1120px,#001b38 1200px,#001d3c 1280px,#001e3f 1360px,#001f41 1440px,#002044 1520px,#002046 1600px,#002248 1680px,#00244a 1760px,#00254d 1840px,#00274f 1920px,#002952 2000px,#002c57 2080px,#002f5d 2160px,#003364 2240px,#003669 2320px,#00386d 2400px,#003a71 2480px,#003c74 2560px,#003e78 2640px,#00407c 2720px,#00417d 2800px,#00417e 2880px,#00407d 2960px,#003f7a 3040px,#003b74 3120px,#00366d 3200px,#003265 3280px,#002f60 3360px,#002d5b 3440px,#002b56 3520px,#002851 3600px,#00244c 3680px,#002249 3760px,#002349 3840px,#002349 3920px,#002249 4000px)"></div><div style="position:absolute;left:0px;top:1980px;width:4000px;height:60px;background:linear-gradient(90deg,#00132b 0px,#00142b 80px,#00142a 160px,#00142a 240px,#00152b 320px,#00152c 400px,#00162e 480px,#001730 560px,#001730 640px,#001730 720px,#00172f 800px,#001730 880px,#001831 960px,#001832 1040px,#001934 1120px,#001a37 1200px,#001b39 1280px,#001c3c 1360px,#001d3f 1440px,#001e41 1520px,#001f43 1600px,#002045 1680px,#002247 1760px,#002349 1840px,#00254b 1920px,#00264d 2000px,#002951 2080px,#002c57 2160px,#00305e 2240px,#003363 2320px,#003567 2400px,#00366a 2480px,#00376c 2560px,#00376c 2640px,#00366b 2720px,#003568 2800px,#00376d 2880px,#003970 2960px,#003970 3040px,#00366c 3120px,#003367 3200px,#003061 3280px,#002d5c 3360px,#002b57 3440px,#002953 3520px,#00264e 3600px,#002349 3680px,#002147 3760px,#002147 3840px,#002147 3920px,#002147 4000px)"></div><div style="position:absolute;left:0px;top:2040px;width:4000px;height:60px;background:linear-gradient(90deg,#00132b 0px,#00132a 80px,#00132a 160px,#00132a 240px,#00142a 320px,#00152c 400px,#00152d 480px,#00162e 560px,#00162e 640px,#00162e 720px,#00162e 800px,#00172f 880px,#001730 960px,#001831 1040px,#001833 1120px,#001935 1200px,#001a38 1280px,#001b3a 1360px,#001c3c 1440px,#001d3e 1520px,#001e40 1600px,#001f42 1680px,#002044 1760px,#002246 1840px,#002347 1920px,#002449 2000px,#00254a 2080px,#002951 2160px,#002c57 2240px,#002f5c 2320px,#003160 2400px,#003262 2480px,#003263 2560px,#003262 2640px,#002f5d 2720px,#002a55 2800px,#00305f 2880px,#003365 2960px,#003366 3040px,#003265 3120px,#003061 3200px,#002d5d 3280px,#002b58 3360px,#002954 3440px,#002750 3520px,#00254b 3600px,#002248 3680px,#002145 3760px,#002045 3840px,#002045 3920px,#002045 4000px)"></div><div style="position:absolute;left:0px;top:2100px;width:4000px;height:60px;background:linear-gradient(90deg,#00122a 0px,#00122a 80px,#00132a 160px,#00132a 240px,#00132a 320px,#00142b 400px,#00152c 480px,#00152c 560px,#00152d 640px,#00162d 720px,#00162d 800px,#00162e 880px,#00162f 960px,#001730 1040px,#001832 1120px,#001934 1200px,#001936 1280px,#001a38 1360px,#001b3a 1440px,#001c3c 1520px,#001d3e 1600px,#001e40 1680px,#001f41 1760px,#002043 1840px,#002144 1920px,#002245 2000px,#002347 2080px,#00264c 2160px,#002952 2240px,#002c57 2320px,#002e5a 2400px,#002e5b 2480px,#002e5b 2560px,#002d5a 2640px,#002b56 2720px,#002952 2800px,#002b57 2880px,#002e5c 2960px,#002f5e 3040px,#002e5e 3120px,#002d5b 3200px,#002b58 3280px,#002954 3360px,#002751 3440px,#00254d 3520px,#002349 3600px,#002246 3680px,#002044 3760px,#002043 3840px,#001f43 3920px,#001f43 4000px)"></div><div style="position:absolute;left:0px;top:2160px;width:4000px;height:60px;background:linear-gradient(90deg,#001229 0px,#00122a 80px,#001229 160px,#001229 240px,#00132a 320px,#00132a 400px,#00142b 480px,#00142b 560px,#00152c 640px,#00152c 720px,#00152c 800px,#00162d 880px,#00162e 960px,#00162f 1040px,#001731 1120px,#001832 1200px,#001934 1280px,#001936 1360px,#001a38 1440px,#001b3a 1520px,#001c3c 1600px,#001d3d 1680px,#001e3f 1760px,#001f40 1840px,#002041 1920px,#002143 2000px,#002245 2080px,#002449 2160px,#00274d 2240px,#002951 2320px,#002a54 2400px,#002b55 2480px,#002b55 2560px,#002a54 2640px,#002851 2720px,#002750 2800px,#002852 2880px,#002a55 2960px,#002b57 3040px,#002b58 3120px,#002a56 3200px,#002954 3280px,#002751 3360px,#00264e 3440px,#00244b 3520px,#002248 3600px,#002145 3680px,#002043 3760px,#001f42 3840px,#001f41 3920px,#001f41 4000px)"></div></div>
<div style="position:absolute;left:60px;top:1040px;width:520px;height:72px;background:linear-gradient(90deg,rgba(0,20,40,0) 0%,rgba(0,20,40,.75) 45%,rgba(0,20,40,.9) 100%);filter:blur(14px)"></div>
<svg style="position:absolute;left:0;top:0" width="3840" height="2160" viewBox="0 0 3840 2160">
<defs>
 <linearGradient id="lg1" x1="0" y1="653" x2="0" y2="1072" gradientUnits="userSpaceOnUse">
  <stop offset="0" stop-color="#0a9cf0"/><stop offset="0.34" stop-color="#0a8ee6"/><stop offset="0.35" stop-color="#7cccf6"/><stop offset="0.37" stop-color="#5cbcf2"/>
  <stop offset="0.52" stop-color="#62c0f3"/><stop offset="0.525" stop-color="#e8f6ff"/><stop offset="0.56" stop-color="#c8eafc"/><stop offset="0.58" stop-color="#a8dcf8"/><stop offset="1" stop-color="#b0e0f8"/>
 </linearGradient>
 <linearGradient id="lg2" x1="0" y1="1101" x2="0" y2="1522" gradientUnits="userSpaceOnUse">
  <stop offset="0" stop-color="#c0e6fa"/><stop offset="0.1" stop-color="#b0dff8"/><stop offset="0.47" stop-color="#a8dcf8"/><stop offset="0.475" stop-color="#f0faff"/><stop offset="0.49" stop-color="#90d0f6"/>
  <stop offset="0.65" stop-color="#6cc4f4"/><stop offset="0.66" stop-color="#0a98ee"/><stop offset="1" stop-color="#0a92ea"/>
 </linearGradient>
 <radialGradient id="flare" cx="0.5" cy="0.5" r="0.5">
  <stop offset="0" stop-color="#ffffff" stop-opacity="1"/><stop offset="0.25" stop-color="#d0f0ff" stop-opacity=".9"/><stop offset="0.6" stop-color="#2a9af0" stop-opacity=".5"/><stop offset="1" stop-color="#0a60b0" stop-opacity="0"/>
 </radialGradient>
 <filter id="bl8" x="-100%" y="-100%" width="300%" height="300%"><feGaussianBlur stdDeviation="8"/></filter>
 <filter id="bl20" x="-100%" y="-100%" width="300%" height="300%"><feGaussianBlur stdDeviation="20"/></filter>
</defs>
<polygon points="3340,580 3410,645 3480,700 3340,700" fill="#1a80e0" opacity=".7" filter="url(#bl20)"/>
<polygon points="3340,1500 3410,1525 3480,1560 3340,1600" fill="#1a80e0" opacity=".7" filter="url(#bl20)"/>
<polygon points="3410,1066 3840,1062 3840,1112 3410,1108" fill="#002a58" opacity=".55" filter="url(#bl8)"/>
<polygon points="3410,652 3840,590 3840,790" fill="#0a70d0" opacity=".25" filter="url(#bl20)"/>
<polygon points="3410,1522 3840,1390 3840,1570" fill="#0a70d0" opacity=".22" filter="url(#bl20)"/>
<polygon points="3338,663 3410,653 3410,1072 3338,1072" fill="url(#lg1)"/>
<polygon points="3338,1101 3408,1101 3408,1522 3338,1514" fill="url(#lg2)"/>
<line x1="3409" y1="653" x2="3409" y2="1072" stroke="#e0f4ff" stroke-width="5"/>
<line x1="3405" y1="1101" x2="3405" y2="1522" stroke="#e0f4ff" stroke-width="5"/>
<polygon points="3338,625 3410,650 3338,668" fill="#ffffff" opacity=".85" filter="url(#bl8)"/>
<polygon points="3338,1512 3408,1522 3338,1548" fill="#ffffff" opacity=".85" filter="url(#bl8)"/>
<ellipse cx="3410" cy="655" rx="34" ry="30" fill="url(#flare)"/>
<ellipse cx="3407" cy="1521" rx="34" ry="30" fill="url(#flare)"/>
</svg>
<svg style="position:absolute;left:45px;top:10px" width="100" height="112" viewBox="0 0 100 112">
<defs><linearGradient id="rbl" x1="0" x2="1"><stop offset="0" stop-color="#9da4ac"/><stop offset=".8" stop-color="#a9afb6"/><stop offset="1" stop-color="#b4bac0"/></linearGradient>
<linearGradient id="rbr" x1="0" x2="1"><stop offset="0" stop-color="#929aa3"/><stop offset="1" stop-color="#808a94"/></linearGradient>
<linearGradient id="rbt" x1="0" x2="1"><stop offset="0" stop-color="#5b6470"/><stop offset=".45" stop-color="#6a737e"/><stop offset="1" stop-color="#5f6874"/></linearGradient></defs>
<polygon points="4.4,17.1 57.1,35.3 56,109 13.9,95.2" fill="url(#rbl)"/>
<polygon points="57.1,35.3 97.2,22.2 85.7,98.8 56,109" fill="url(#rbr)"/>
<polygon points="4.4,17.1 43.3,4.4 97.2,22.2 57.1,35.3" fill="url(#rbt)" stroke="#eef0f2" stroke-width="1.3" stroke-linejoin="round"/>
<polygon points="14.3,92.5 42.1,81.7 85.7,96.4 55.6,105.6" fill="#cbcdd0"/>
<polygon points="14.3,92.5 55.6,105.6 85.7,96.4 85.7,99.5 56,109 13.9,95.5" fill="#9c9ea1"/>
<g fill="#0a84e0">
<polygon points="22.2,48.4 27,43.6 37.3,47.6 41,55.5 35.5,56 33.5,51.5 28.5,54.8"/><polygon points="31.7,56.7 44.8,54.8 41.3,62.3"/>
<polygon points="15.1,54 24,53.6 17.5,61.5"/><polygon points="17.5,58 23,56 27.5,64 28,74.6 21,72 15.5,64"/>
<polygon points="31,71.4 38.9,67 37.3,80.6"/><polygon points="37,72 41,66 47.6,65 48.5,71.5 45.5,78.5 39,77"/>
</g>
<g fill="#0066c4"><polygon points="22.2,48.4 27,43.6 31.3,46.8 28.2,54.8"/><polygon points="20,67 27.5,65 28,74.6 21.5,72.5"/><polygon points="39.3,65.5 47.6,65 48.5,71.5 41.5,71.5"/></g>
</svg>
<div class="t" style="left:49.0px;top:137.3px;font-size:30px;line-height:30px;color:#fff;transform:scaleX(0.9890);transform-origin:0 0;text-shadow:0 1px 2px rgba(0,0,0,.9);">Lomtár</div>
<svg style="position:absolute;left:41px;top:257px" width="110" height="110" viewBox="0 0 110 110">
<circle cx="55" cy="55" r="55" fill="#db4437"/>
<path d="M55,55 L8.4,28 A55,55 0 0 0 55,110 Z" fill="#0f9d58"/>
<path d="M55,55 L55,110 A55,55 0 0 0 102.6,28 L55,28 Z" fill="#ffcd40"/>
<path d="M55,55 L102.6,27.5 L55,27.5 Z" fill="#ffcd40"/>
<circle cx="55" cy="55" r="25" fill="#f1f1f1"/>
<circle cx="55" cy="55" r="20" fill="#4e8cf1"/>
</svg>
<svg style="position:absolute;left:36px;top:341px" width="31" height="31" viewBox="0 0 31 31"><defs><linearGradient id="scg" x1="0" y1="0" x2="1" y2="1"><stop offset="0" stop-color="#f6f6f6"/><stop offset="1" stop-color="#ececec"/></linearGradient></defs><rect x="0" y="0" width="31" height="31" rx="1.5" fill="url(#scg)"/><path d="M7.3,3.3 H24.8 V21.1 L19.3,15.8 C16,18.5 13,21 13.2,24 C13.3,26 13.5,27.5 13.8,28.9 C8,27 5,23 5.4,19.6 C5.6,16.5 7,14 9,12 L12,9 Z" fill="#3566a5"/></svg>
<div class="t" style="left:47.0px;top:381.6px;font-size:30px;line-height:30px;color:#fff;transform:scaleX(1.0181);transform-origin:0 0;text-shadow:0 1px 2px rgba(0,0,0,.9);">Google</div>
<div class="t" style="left:43.3px;top:423.1px;font-size:30px;line-height:30px;color:#fff;transform:scaleX(0.9923);transform-origin:0 0;text-shadow:0 1px 2px rgba(0,0,0,.9);">Chrome</div>
<svg style="position:absolute;left:36px;top:495px" width="120" height="120" viewBox="0 0 120 120">
<defs><radialGradient id="ffgd" cx=".38" cy=".22" r=".85"><stop offset="0" stop-color="#45b8ec"/><stop offset=".45" stop-color="#1a6ab8"/><stop offset="1" stop-color="#0b1e58"/></radialGradient>
<linearGradient id="ffod" x1="0" y1="0" x2="1" y2="1"><stop offset="0" stop-color="#f08a22"/><stop offset=".55" stop-color="#dc4a1a"/><stop offset="1" stop-color="#e8741e"/></linearGradient>
<linearGradient id="ffyd" x1="0" y1="0" x2="0" y2="1"><stop offset="0" stop-color="#ffffff"/><stop offset=".35" stop-color="#ffe04a"/><stop offset="1" stop-color="#f59a1e"/></linearGradient></defs>
<circle cx="58" cy="47" r="41" fill="url(#ffgd)"/>
<path d="M15.7,17.4 L21,27 C30,24 40,22 49.7,20.7 C46,26 43,31 43.5,35 C50,35.5 55,36.5 58,38.5 C55,44 50,47.5 45.5,48 C46.5,51 47,54.5 46,57 C39,57 32,61 30.5,66 C33,74 42,78.5 52,77.5 C61,76.5 67,71 71.2,70.4 C66,79 58,84.5 49,84.5 C42,84.5 44,87 52,89 C70,92 86,84 94,70 C100,58 101,44 97,30 C107,40 113,54 112,68 C110,94 88,114 60,114 C30,114 6,92 5,62 C5,46 9,32 15.7,17.4 Z" fill="url(#ffod)"/>
<path d="M82,13 C98,22 110,38 110,60 C110,75 104,86 96,94 C102,80 104,66 100,50 C97,36 90,24 82,13 Z" fill="url(#ffyd)"/>
<path d="M44,41 C48,40 54,41 57,39 C55,43 50,46 45,46 Z" fill="#f6d0b0"/>
</svg>
<svg style="position:absolute;left:36px;top:586px" width="31" height="31" viewBox="0 0 31 31"><defs><linearGradient id="scg" x1="0" y1="0" x2="1" y2="1"><stop offset="0" stop-color="#f6f6f6"/><stop offset="1" stop-color="#ececec"/></linearGradient></defs><rect x="0" y="0" width="31" height="31" rx="1.5" fill="url(#scg)"/><path d="M7.3,3.3 H24.8 V21.1 L19.3,15.8 C16,18.5 13,21 13.2,24 C13.3,26 13.5,27.5 13.8,28.9 C8,27 5,23 5.4,19.6 C5.6,16.5 7,14 9,12 L12,9 Z" fill="#3566a5"/></svg>
<div class="t" style="left:48.4px;top:627.6px;font-size:30px;line-height:30px;color:#fff;transform:scaleX(0.9891);transform-origin:0 0;text-shadow:0 1px 2px rgba(0,0,0,.9);">Mozilla</div>
<div class="t" style="left:51.1px;top:667.9px;font-size:30px;line-height:30px;color:#fff;transform:scaleX(0.9663);transform-origin:0 0;text-shadow:0 1px 2px rgba(0,0,0,.9);">Firefox</div>
<svg style="position:absolute;left:43px;top:744px" width="110" height="112" viewBox="0 0 110 112">
<defs><linearGradient id="npg" x1="0" y1="0" x2="0" y2="1"><stop offset="0" stop-color="#f6f8fa"/><stop offset=".38" stop-color="#eef2f2"/><stop offset=".48" stop-color="#e8f0a0"/><stop offset=".62" stop-color="#b8e050"/><stop offset=".8" stop-color="#62c830"/><stop offset="1" stop-color="#18a020"/></linearGradient></defs>
<polygon points="0.5,10.8 54,11.5 73.8,27.6 86,104 25.4,110 0.5,92.8" fill="url(#npg)" stroke="#dde2e6" stroke-width="1"/>
<polygon points="54,11.5 73.8,27.6 58,29" fill="#d8dde2"/>
<g stroke="#b4c8da" stroke-width=".9"><line x1="2" y1="20" x2="62" y2="20"/><line x1="2" y1="25" x2="70" y2="25"/><line x1="2" y1="30" x2="75" y2="30"/><line x1="2" y1="35" x2="76" y2="35"/><line x1="2" y1="40" x2="77" y2="40"/><line x1="2" y1="45" x2="77" y2="45"/><line x1="2" y1="50" x2="78" y2="50"/></g>
<circle cx="3.0" cy="12.3" r="1.1" fill="#333"/><circle cx="7.3" cy="12.3" r="1.1" fill="#333"/><circle cx="11.6" cy="12.3" r="1.1" fill="#333"/><circle cx="15.9" cy="12.3" r="1.1" fill="#333"/><circle cx="20.2" cy="12.3" r="1.1" fill="#333"/><circle cx="24.5" cy="12.3" r="1.1" fill="#333"/><circle cx="28.8" cy="12.3" r="1.1" fill="#333"/><circle cx="33.1" cy="12.3" r="1.1" fill="#333"/><circle cx="37.4" cy="12.3" r="1.1" fill="#333"/><circle cx="41.7" cy="12.3" r="1.1" fill="#333"/><circle cx="46.0" cy="12.3" r="1.1" fill="#333"/><circle cx="50.3" cy="12.3" r="1.1" fill="#333"/>
<path d="M14,58 C12,48 20,42 28,44 C34,45 38,50 40,56 C36,58 20,60 14,58 Z" fill="#7ac943" stroke="#2a5a1a" stroke-width="1"/>
<path d="M14,58 C10,62 12,70 20,70 C25,70 26,64 21,63" fill="none" stroke="#5aa030" stroke-width="2.6"/>
<circle cx="29" cy="44" r="5.2" fill="#fff" stroke="#222" stroke-width="1.2"/><circle cx="40" cy="45" r="4.8" fill="#fff" stroke="#222" stroke-width="1.2"/>
<circle cx="30" cy="45" r="1.8" fill="#111"/><circle cx="41" cy="46" r="1.8" fill="#111"/>
<line x1="5" y1="62" x2="46.5" y2="58.5" stroke="#8b6a3a" stroke-width="2.6"/>
<text x="0" y="0" font-family="Liberation Sans" font-size="21" fill="#2a2a2a" transform="translate(29,83) rotate(-11) scale(0.62,1)">Notepad++</text>
<line x1="106" y1="3" x2="76" y2="70" stroke="#f0a818" stroke-width="6"/><line x1="106" y1="3" x2="103" y2="9.5" stroke="#c8393b" stroke-width="6.5"/><line x1="102.5" y1="10" x2="101" y2="13.5" stroke="#999" stroke-width="6.2"/>
<polygon points="73.5,68.5 79,71 74,77" fill="#e8c890"/>
</svg>
<svg style="position:absolute;left:36px;top:831px" width="31" height="31" viewBox="0 0 31 31"><defs><linearGradient id="scg" x1="0" y1="0" x2="1" y2="1"><stop offset="0" stop-color="#f6f6f6"/><stop offset="1" stop-color="#ececec"/></linearGradient></defs><rect x="0" y="0" width="31" height="31" rx="1.5" fill="url(#scg)"/><path d="M7.3,3.3 H24.8 V21.1 L19.3,15.8 C16,18.5 13,21 13.2,24 C13.3,26 13.5,27.5 13.8,28.9 C8,27 5,23 5.4,19.6 C5.6,16.5 7,14 9,12 L12,9 Z" fill="#3566a5"/></svg>
<div class="t" style="left:15.9px;top:872.3px;font-size:30px;line-height:30px;color:#fff;transform:scaleX(1.0621);transform-origin:0 0;text-shadow:0 1px 2px rgba(0,0,0,.9);">Notepad++</div>
<svg style="position:absolute;left:43px;top:996px" width="106" height="86" viewBox="0 0 106 86">
<defs>
<linearGradient id="wrp" x1="0" y1="0" x2="0" y2="1"><stop offset="0" stop-color="#b848b0"/><stop offset=".25" stop-color="#f48af0"/><stop offset=".55" stop-color="#c458c0"/><stop offset="1" stop-color="#6a2a68"/></linearGradient>
<linearGradient id="wrb" x1="0" y1="0" x2="0" y2="1"><stop offset="0" stop-color="#1a28b0"/><stop offset=".25" stop-color="#4a68ff"/><stop offset=".6" stop-color="#1e22c8"/><stop offset="1" stop-color="#08107a"/></linearGradient>
<linearGradient id="wrg" x1="0" y1="0" x2="0" y2="1"><stop offset="0" stop-color="#18a018"/><stop offset=".25" stop-color="#30f030"/><stop offset=".6" stop-color="#1eb81e"/><stop offset="1" stop-color="#2a5a20"/></linearGradient>
<linearGradient id="wrs" x1="0" y1="0" x2="1" y2="0"><stop offset="0" stop-color="#c8c8e0"/><stop offset=".5" stop-color="#f4f4ff"/><stop offset="1" stop-color="#b8b8d0"/></linearGradient>
</defs>
<polygon points="0.5,1.4 86.3,1.4 104.3,18.2 19.2,18.2" fill="#754a72"/>
<polygon points="12.3,2.6 25,2.6 36.6,15 24,15" fill="#c8c020"/>
<polygon points="36,1.4 46.5,1.4 67.6,18.2 57,18.2" fill="#a8742a"/>
<rect x="19.2" y="18.2" width="85.1" height="20.5" fill="url(#wrp)"/>
<rect x="19.2" y="38.7" width="85.1" height="2.5" fill="#080808"/>
<rect x="19.2" y="41.2" width="85.1" height="19.3" fill="url(#wrb)"/>
<rect x="19.2" y="60.5" width="85.1" height="2.3" fill="#080808"/>
<rect x="19.2" y="62.8" width="85.1" height="21.5" fill="url(#wrg)"/>
<polygon points="0.5,1.4 19.2,18.2 19.2,84.3 0.5,67.5" fill="url(#wrs)"/>
<g stroke="#303040" stroke-width="1.6"><line x1="0.5" y1="22" x2="19.2" y2="38.7"/><line x1="0.5" y1="44" x2="19.2" y2="60.5"/><line x1="0.5" y1="1.4" x2="19.2" y2="18.2"/></g>
<g fill="#e0d020"><rect x="25" y="27" width="2.2" height="8"/><rect x="29.5" y="27" width="2.2" height="8"/><rect x="25" y="49" width="2.2" height="8"/><rect x="29.5" y="49" width="2.2" height="8"/><rect x="25" y="72" width="2.2" height="8"/><rect x="29.5" y="72" width="2.2" height="8"/></g>
<rect x="57" y="18.2" width="10.6" height="66" fill="#9b6a24"/><rect x="59" y="18.2" width="3" height="66" fill="#c08a40"/>
<rect x="54.5" y="33" width="17.5" height="19" rx="2" fill="#d8d8d8" stroke="#505050" stroke-width="1.5"/><rect x="59" y="37" width="8.5" height="11" fill="#404040"/>
</svg>
<svg style="position:absolute;left:36px;top:1076px" width="31" height="31" viewBox="0 0 31 31"><defs><linearGradient id="scg" x1="0" y1="0" x2="1" y2="1"><stop offset="0" stop-color="#f6f6f6"/><stop offset="1" stop-color="#ececec"/></linearGradient></defs><rect x="0" y="0" width="31" height="31" rx="1.5" fill="url(#scg)"/><path d="M7.3,3.3 H24.8 V21.1 L19.3,15.8 C16,18.5 13,21 13.2,24 C13.3,26 13.5,27.5 13.8,28.9 C8,27 5,23 5.4,19.6 C5.6,16.5 7,14 9,12 L12,9 Z" fill="#3566a5"/></svg>
<div class="t" style="left:43.0px;top:1116.6px;font-size:30px;line-height:30px;color:#fff;transform:scaleX(0.9336);transform-origin:0 0;text-shadow:0 1px 2px rgba(0,0,0,.9);">WinRAR</div>
<div style="position:absolute;left:520px;top:290px;width:2820px;height:1486px;background:#fff;box-sizing:border-box;border:2px solid #1a80d4;"></div>
<svg style="position:absolute;left:535px;top:315px" width="38" height="30" viewBox="0 0 38 30">
<g fill="#00b4f0"><polygon points="1,3 6,2.3 6,7.5 1,7.5"/><polygon points="7.5,2 15,1 15,7.5 7.5,7.5"/><polygon points="1,9 6,9 6,14 1,13.4"/><polygon points="7.5,9 15,9 15,15.5 7.5,14.3"/></g>
<polygon points="1,19 17,10 37,15 37,22 21,29 1,24" fill="#d4d6d8"/>
<polygon points="1,19 21,24 21,29 1,24" fill="#444"/>
<polygon points="21,24 37,17 37,22 21,29" fill="#b0b3b6"/>
<polygon points="2,20 20,24.5 20,28 2,23.5" fill="#2a2a2a"/>
<rect x="15" y="24.5" width="2" height="2" fill="#2ec02e"/>
</svg>
<div style="position:absolute;left:586px;top:313px;width:2px;height:33px;background:#8a8a8a"></div>
<svg style="position:absolute;left:619px;top:312px" width="28" height="36" viewBox="0 0 28 36">
<path d="M0.5,0.5 H21.5 L27.5,6.5 V35.5 H0.5 Z" fill="#f4f5f6" stroke="#8c8c8c" stroke-width="1"/>
<path d="M21.5,0.5 V6.5 H27.5" fill="#e2e2e2" stroke="#8c8c8c" stroke-width="1"/>
<polyline points="4.5,19.5 11,26 23.5,13" fill="none" stroke="#e8501c" stroke-width="2.6"/>
</svg>
<svg style="position:absolute;left:674px;top:314px" width="24" height="34" viewBox="0 0 24 34"><defs><linearGradient id="fb1" x1="0" x2="1"><stop offset="0" stop-color="#f0c860"/><stop offset="1" stop-color="#fcdc84"/></linearGradient>
<linearGradient id="ff1" x1="0" x2="1"><stop offset="0" stop-color="#fdeaa8"/><stop offset="1" stop-color="#f8dc8c"/></linearGradient></defs>
<path d="M0,0 H21 V19 H23.5 V29 H0 Z" fill="url(#fb1)"/>
<path d="M0,0 L8,6.5 V34 L0,28.5 Z" fill="url(#ff1)"/></svg>
<svg style="position:absolute;left:724px;top:322px" width="15" height="15" viewBox="0 0 15 15"><rect x="1" y="1" width="13" height="2.2" fill="#000"/><polygon points="1.5,6.5 13.5,6.5 7.5,13.5" fill="#000"/></svg>
<div style="position:absolute;left:764px;top:313px;width:2px;height:33px;background:#8a8a8a"></div>
<div class="t" style="left:779.2px;top:313.5px;font-size:29px;line-height:29px;color:#000;transform:scaleX(0.9146);transform-origin:0 0;">OS (C:)</div>
<div style="position:absolute;left:3036px;top:325px;width:21px;height:2px;background:#000"></div>
<div style="position:absolute;left:3152px;top:316px;width:20px;height:20px;box-sizing:border-box;border:2px solid #000"></div>
<svg style="position:absolute;left:3268px;top:315px" width="22" height="22" viewBox="0 0 22 22"><path d="M1,1 L21,21 M21,1 L1,21" stroke="#000" stroke-width="2"/></svg>
<div style="position:absolute;left:522px;top:362px;width:140px;height:57px;background:#1979ca"></div>
<div class="t" style="left:571.6px;top:379.7px;font-size:27px;line-height:27px;color:#fff;transform:scaleX(0.9325);transform-origin:0 0;">Fájl</div>
<div class="t" style="left:694.3px;top:379.7px;font-size:27px;line-height:27px;color:#222;transform:scaleX(0.9882);transform-origin:0 0;">Kezdőlap</div>
<div class="t" style="left:873.7px;top:379.7px;font-size:27px;line-height:27px;color:#222;transform:scaleX(0.9734);transform-origin:0 0;">Megosztás</div>
<div class="t" style="left:1068.0px;top:379.7px;font-size:27px;line-height:27px;color:#222;transform:scaleX(0.9956);transform-origin:0 0;">Nézet</div>
<div style="position:absolute;left:522px;top:422px;width:2816px;height:1px;background:#dadbdc"></div>
<svg style="position:absolute;left:3243px;top:383px" width="28" height="15" viewBox="0 0 28 15"><polyline points="1,1 14,14 27,1" fill="none" stroke="#7a7a7a" stroke-width="2"/></svg>
<svg style="position:absolute;left:3293px;top:373px" width="36" height="36" viewBox="0 0 36 36"><circle cx="18" cy="18" r="17.5" fill="#0f6fd0" stroke="#0a5fb8" stroke-width="1"/><text x="18" y="28.5" text-anchor="middle" font-family="Liberation Sans" font-size="29" fill="#fff">?</text></svg>
<svg style="position:absolute;left:552px;top:452px" width="36" height="26" viewBox="0 0 36 26"><path d="M3,12.5 H33 M14,2 L3.5,12.5 L14,23" fill="none" stroke="#7a7a7a" stroke-width="5"/></svg>
<svg style="position:absolute;left:624px;top:452px" width="36" height="26" viewBox="0 0 36 26"><path d="M3,12.5 H31 M21,2 L31.5,12.5 L21,23" fill="none" stroke="#dadada" stroke-width="5"/></svg>
<svg style="position:absolute;left:690px;top:457px" width="22" height="15" viewBox="0 0 22 15"><polyline points="2,2 11,11.5 20,2" fill="none" stroke="#7a7a7a" stroke-width="4"/></svg>
<svg style="position:absolute;left:735px;top:448px" width="34" height="34" viewBox="0 0 34 34"><path d="M16.5,33 V4 M2,18 L16.5,3.5 L31,18" fill="none" stroke="#7a7a7a" stroke-width="5"/></svg>
<div style="position:absolute;left:783px;top:440px;width:2022px;height:46px;box-sizing:border-box;border:1px solid #d9d9d9;"></div>
<svg style="position:absolute;left:787px;top:451px" width="38" height="30" viewBox="0 0 38 30">
<g fill="#00b4f0"><polygon points="1,3 6,2.3 6,7.5 1,7.5"/><polygon points="7.5,2 15,1 15,7.5 7.5,7.5"/><polygon points="1,9 6,9 6,14 1,13.4"/><polygon points="7.5,9 15,9 15,15.5 7.5,14.3"/></g>
<polygon points="1,19 17,10 37,15 37,22 21,29 1,24" fill="#d4d6d8"/>
<polygon points="1,19 21,24 21,29 1,24" fill="#444"/>
<polygon points="21,24 37,17 37,22 21,29" fill="#b0b3b6"/>
<polygon points="2,20 20,24.5 20,28 2,23.5" fill="#2a2a2a"/>
<rect x="15" y="24.5" width="2" height="2" fill="#2ec02e"/>
</svg>
<svg style="position:absolute;left:840px;top:451px" width="18" height="21" viewBox="0 0 18 21"><polyline points="3,2 13,10.5 3,19" fill="none" stroke="#808080" stroke-width="4"/></svg>
<div class="t" style="left:873.0px;top:449.5px;font-size:29px;line-height:29px;color:#000;transform:scaleX(0.9820);transform-origin:0 0;">Ez a gép</div>
<svg style="position:absolute;left:1002px;top:451px" width="18" height="21" viewBox="0 0 18 21"><polyline points="3,2 13,10.5 3,19" fill="none" stroke="#808080" stroke-width="4"/></svg>
<div class="t" style="left:1034.1px;top:449.5px;font-size:29px;line-height:29px;color:#000;transform:scaleX(0.9167);transform-origin:0 0;">OS (C:)</div>
<svg style="position:absolute;left:2723px;top:456px" width="27" height="17" viewBox="0 0 27 17"><polyline points="2,2 13.5,14 25,2" fill="none" stroke="#7a7a7a" stroke-width="4"/></svg>
<div style="position:absolute;left:2759px;top:441px;width:1px;height:44px;background:#d9d9d9"></div>
<svg style="position:absolute;left:2767px;top:448px" width="32" height="32" viewBox="0 0 32 32"><path d="M20.5,6.2 A11.5,11.5 0 1 1 8,6.5" fill="none" stroke="#7a7a7a" stroke-width="5"/><polygon points="3,2 13,2 12,12" fill="#7a7a7a"/></svg>
<div style="position:absolute;left:2818px;top:440px;width:508px;height:46px;box-sizing:border-box;border:1px solid #d9d9d9;"></div>
<div class="t" style="left:2831.1px;top:451.1px;font-size:29px;line-height:29px;color:#6d6d6d;transform:scaleX(0.9433);transform-origin:0 0;">Keresés: OS (C:)</div>
<svg style="position:absolute;left:3280px;top:449px" width="32" height="31" viewBox="0 0 32 31"><circle cx="20.5" cy="10.5" r="8" fill="none" stroke="#7a7a7a" stroke-width="4.5"/><line x1="14" y1="17" x2="3" y2="28" stroke="#7a7a7a" stroke-width="5.5" stroke-linecap="round"/></svg>
<div style="position:absolute;left:915px;top:505px;width:2px;height:1211px;background:#f0f0f0"></div>
<div style="position:absolute;left:522px;top:1045px;width:390px;height:60px;background:#d9d9d9"></div>
<svg style="position:absolute;left:580px;top:540px" width="44" height="32" viewBox="0 0 44 32">
<defs><linearGradient id="stg" x1="0" y1="0" x2="0" y2="1"><stop offset="0" stop-color="#38bcff"/><stop offset="1" stop-color="#1590e6"/></linearGradient>
<linearGradient id="stl" x1="0" x2="1"><stop offset="0" stop-color="#b8e2fc" stop-opacity="0"/><stop offset="1" stop-color="#8ccefa"/></linearGradient></defs>
<g stroke="url(#stl)" stroke-width="1.8"><line x1="14" y1="4.3" x2="26" y2="4.3"/><line x1="12.5" y1="8.2" x2="23.5" y2="8.2"/><line x1="7" y1="19.2" x2="16" y2="19.2"/><line x1="5" y1="23.4" x2="13.5" y2="23.4"/></g>
<polygon points="29.8,2.1 31.4,12 41.6,12.4 31.4,20 29.8,30.2 23.4,24.5 11.6,30.2 16.2,20 11.3,12.4 23.4,12" fill="url(#stg)"/>
</svg>
<div class="t" style="left:627.0px;top:541.5px;font-size:29px;line-height:29px;color:#000;transform:scaleX(0.9816);transform-origin:0 0;">Gyors elérés</div>
<svg style="position:absolute;left:609px;top:599px" width="34" height="36" viewBox="0 0 34 36"><defs><linearGradient id="fb2" x1="0" x2="1"><stop offset="0" stop-color="#f0c860"/><stop offset="1" stop-color="#fcdc84"/></linearGradient>
<linearGradient id="ff2" x1="0" x2="1"><stop offset="0" stop-color="#fdeaa8"/><stop offset="1" stop-color="#f8dc8c"/></linearGradient></defs>
<path d="M0,0 H21 V19 H23.5 V29 H0 Z" fill="url(#fb2)"/>
<path d="M0,0 L8,6.5 V34 L0,28.5 Z" fill="url(#ff2)"/><rect x="10" y="15" width="22" height="16" fill="#14a0fa"/><polygon points="18,29 30,17 32,17 32,20 22,29" fill="#5ac0ff" opacity=".6"/><rect x="10" y="29" width="22" height="2" fill="#0a5aa0"/></svg>
<div class="t" style="left:648.0px;top:601.5px;font-size:29px;line-height:29px;color:#000;transform:scaleX(0.9744);transform-origin:0 0;">Asztal</div>
<svg style="position:absolute;left:879px;top:603px" width="26" height="25" viewBox="0 0 26 25"><path d="M16,1 L25,10 L22,11 L17,16 L17,21 L14,21 L10,16 L2,24 L1,23 L9,15 L4,11 L4,8 L9,8 L14,3 Z" fill="#8a939b"/></svg>
<svg style="position:absolute;left:609px;top:659px" width="34" height="36" viewBox="0 0 34 36"><defs><linearGradient id="fb3" x1="0" x2="1"><stop offset="0" stop-color="#f0c860"/><stop offset="1" stop-color="#fcdc84"/></linearGradient>
<linearGradient id="ff3" x1="0" x2="1"><stop offset="0" stop-color="#fdeaa8"/><stop offset="1" stop-color="#f8dc8c"/></linearGradient></defs>
<path d="M0,0 H21 V19 H23.5 V29 H0 Z" fill="url(#fb3)"/>
<path d="M0,0 L8,6.5 V34 L0,28.5 Z" fill="url(#ff3)"/><rect x="16" y="14" width="8" height="10" fill="#2d8be6"/><polygon points="11,22 29,22 20,32" fill="#2d8be6"/></svg>
<div class="t" style="left:645.9px;top:661.5px;font-size:29px;line-height:29px;color:#000;transform:scaleX(1.0308);transform-origin:0 0;">Letöltések</div>
<svg style="position:absolute;left:879px;top:663px" width="26" height="25" viewBox="0 0 26 25"><path d="M16,1 L25,10 L22,11 L17,16 L17,21 L14,21 L10,16 L2,24 L1,23 L9,15 L4,11 L4,8 L9,8 L14,3 Z" fill="#8a939b"/></svg>
<svg style="position:absolute;left:609px;top:719px" width="34" height="36" viewBox="0 0 34 36"><defs><linearGradient id="fb4" x1="0" x2="1"><stop offset="0" stop-color="#f0c860"/><stop offset="1" stop-color="#fcdc84"/></linearGradient>
<linearGradient id="ff4" x1="0" x2="1"><stop offset="0" stop-color="#fdeaa8"/><stop offset="1" stop-color="#f8dc8c"/></linearGradient></defs>
<path d="M0,0 H21 V19 H23.5 V29 H0 Z" fill="url(#fb4)"/>
<path d="M0,0 L8,6.5 V34 L0,28.5 Z" fill="url(#ff4)"/><rect x="11" y="9" width="16" height="22" fill="#fafafa" stroke="#888" stroke-width="1"/><g stroke="#4a7cc0" stroke-width="1.2"><line x1="14" y1="14" x2="24" y2="14"/><line x1="14" y1="18" x2="24" y2="18"/><line x1="14" y1="22" x2="24" y2="22"/></g><rect x="19" y="24" width="6" height="5" fill="#4a7cc0"/></svg>
<div class="t" style="left:645.9px;top:721.5px;font-size:29px;line-height:29px;color:#000;transform:scaleX(1.0697);transform-origin:0 0;">Dokumentumok</div>
<svg style="position:absolute;left:879px;top:723px" width="26" height="25" viewBox="0 0 26 25"><path d="M16,1 L25,10 L22,11 L17,16 L17,21 L14,21 L10,16 L2,24 L1,23 L9,15 L4,11 L4,8 L9,8 L14,3 Z" fill="#8a939b"/></svg>
<svg style="position:absolute;left:609px;top:779px" width="34" height="36" viewBox="0 0 34 36"><defs><linearGradient id="fb5" x1="0" x2="1"><stop offset="0" stop-color="#f0c860"/><stop offset="1" stop-color="#fcdc84"/></linearGradient>
<linearGradient id="ff5" x1="0" x2="1"><stop offset="0" stop-color="#fdeaa8"/><stop offset="1" stop-color="#f8dc8c"/></linearGradient></defs>
<path d="M0,0 H21 V19 H23.5 V29 H0 Z" fill="url(#fb5)"/>
<path d="M0,0 L8,6.5 V34 L0,28.5 Z" fill="url(#ff5)"/><rect x="11" y="16" width="22" height="15" fill="#fff" stroke="#888" stroke-width="1"/><rect x="13" y="18" width="18" height="11" fill="#7ab0dc"/><path d="M13,25 Q20,21 31,26 V29 H13Z" fill="#3d7a55"/></svg>
<div class="t" style="left:646.0px;top:781.5px;font-size:29px;line-height:29px;color:#000;transform:scaleX(1.0088);transform-origin:0 0;">Képek</div>
<svg style="position:absolute;left:879px;top:783px" width="26" height="25" viewBox="0 0 26 25"><path d="M16,1 L25,10 L22,11 L17,16 L17,21 L14,21 L10,16 L2,24 L1,23 L9,15 L4,11 L4,8 L9,8 L14,3 Z" fill="#8a939b"/></svg>
<svg style="position:absolute;left:609px;top:839px" width="34" height="36" viewBox="0 0 34 36"><defs><linearGradient id="fb6" x1="0" x2="1"><stop offset="0" stop-color="#f0c860"/><stop offset="1" stop-color="#fcdc84"/></linearGradient>
<linearGradient id="ff6" x1="0" x2="1"><stop offset="0" stop-color="#fdeaa8"/><stop offset="1" stop-color="#f8dc8c"/></linearGradient></defs>
<path d="M0,0 H21 V19 H23.5 V29 H0 Z" fill="url(#fb6)"/>
<path d="M0,0 L8,6.5 V34 L0,28.5 Z" fill="url(#ff6)"/><rect x="11" y="10" width="20" height="20" fill="#333"/><rect x="14" y="12" width="14" height="7" fill="#3a6ad0"/><rect x="14" y="21" width="14" height="7" fill="#3a6ad0"/><circle cx="21" cy="15" r="2.5" fill="#e0a020"/><circle cx="21" cy="24" r="2.5" fill="#e0a020"/></svg>
<div class="t" style="left:648.0px;top:841.5px;font-size:29px;line-height:29px;color:#000;transform:scaleX(1.0443);transform-origin:0 0;">Videók</div>
<svg style="position:absolute;left:609px;top:899px" width="34" height="36" viewBox="0 0 34 36"><defs><linearGradient id="fb7" x1="0" x2="1"><stop offset="0" stop-color="#f0c860"/><stop offset="1" stop-color="#fcdc84"/></linearGradient>
<linearGradient id="ff7" x1="0" x2="1"><stop offset="0" stop-color="#fdeaa8"/><stop offset="1" stop-color="#f8dc8c"/></linearGradient></defs>
<path d="M0,0 H21 V19 H23.5 V29 H0 Z" fill="url(#fb7)"/>
<path d="M0,0 L8,6.5 V34 L0,28.5 Z" fill="url(#ff7)"/><path d="M20,8 V26" stroke="#2a8ae0" stroke-width="2.5"/><ellipse cx="16.5" cy="27" rx="5.5" ry="4.5" fill="#2a8ae0"/><path d="M20,8 Q28,12 27,22 Q26,16 20,14" fill="#2a8ae0"/></svg>
<div class="t" style="left:647.0px;top:901.5px;font-size:29px;line-height:29px;color:#000;transform:scaleX(1.0000);transform-origin:0 0;">Zene</div>
<svg style="position:absolute;left:583px;top:981px" width="38" height="26" viewBox="0 0 38 26"><path d="M7,24 C1,24 0,15 7,14 C8,6 17,4 21,10 C25,5 34,7 33,14 C38,15 38,24 32,24 Z" fill="#1855b8"/></svg>
<div class="t" style="left:627.0px;top:981.5px;font-size:29px;line-height:29px;color:#000;transform:scaleX(1.0217);transform-origin:0 0;">OneDrive</div>
<svg style="position:absolute;left:582px;top:1059px" width="40" height="36" viewBox="0 0 40 36">
<polygon points="11,1 37,6 37,24 11,19" fill="#3ab0f0"/><polygon points="11,1 37,6 37,8 11,3" fill="#9ad8fa"/>
<polygon points="22,22 30,24 29,28 21,26" fill="#a0a8b0"/>
<polygon points="0,29 12,25 30,30 18,35" fill="#e4e7ea" stroke="#a6adb4" stroke-width="1"/>
</svg>
<div class="t" style="left:626.0px;top:1061.5px;font-size:29px;line-height:29px;color:#000;transform:scaleX(0.9910);transform-origin:0 0;">Ez a gép</div>
<svg style="position:absolute;left:583px;top:1137px" width="38" height="36" viewBox="0 0 38 36">
<circle cx="25" cy="12" r="11.5" fill="#3c8ac8"/><path d="M17,6 Q22,9 20,15 Q26,14 30,20" stroke="#b8dcf0" stroke-width="2" fill="none"/>
<polygon points="1,13 21,17 21,31 1,27" fill="#3ab0f0"/>
<polygon points="6,30 16,32 16,35 6,33" fill="#b0b8c0"/>
</svg>
<div class="t" style="left:625.9px;top:1141.5px;font-size:29px;line-height:29px;color:#000;transform:scaleX(1.0281);transform-origin:0 0;">Hálózat</div>
<div style="position:absolute;left:950px;top:522px;width:32px;height:32px;box-sizing:border-box;border:2px solid #333;"></div>
<div class="t" style="left:1006.9px;top:525.5px;font-size:29px;line-height:29px;color:#4c607a;transform:scaleX(1.0408);transform-origin:0 0;">Név</div>
<svg style="position:absolute;left:1266px;top:509px" width="18" height="11" viewBox="0 0 18 11"><polyline points="1,9.5 8.5,2 16,9.5" fill="none" stroke="#6d6d6d" stroke-width="1.6"/></svg>
<div style="position:absolute;left:1601px;top:505px;width:1px;height:67px;background:#e5e5e5"></div>
<div style="position:absolute;left:1901px;top:505px;width:1px;height:67px;background:#e5e5e5"></div>
<div style="position:absolute;left:2201px;top:505px;width:1px;height:67px;background:#e5e5e5"></div>
<div style="position:absolute;left:2401px;top:505px;width:1px;height:67px;background:#e5e5e5"></div>
<div class="t" style="left:1616.4px;top:526.5px;font-size:29px;line-height:29px;color:#4c607a;transform:scaleX(1.0390);transform-origin:0 0;">Módosítás dátuma</div>
<div class="t" style="left:1916.5px;top:526.5px;font-size:29px;line-height:29px;color:#4c607a;transform:scaleX(0.9873);transform-origin:0 0;">Típus</div>
<div class="t" style="left:2215.3px;top:526.5px;font-size:29px;line-height:29px;color:#4c607a;transform:scaleX(1.0875);transform-origin:0 0;">Méret</div>
<svg style="position:absolute;left:1011px;top:597px" width="24" height="34" viewBox="0 0 24 34"><defs><linearGradient id="fb8" x1="0" x2="1"><stop offset="0" stop-color="#f0c860"/><stop offset="1" stop-color="#fcdc84"/></linearGradient>
<linearGradient id="ff8" x1="0" x2="1"><stop offset="0" stop-color="#fdeaa8"/><stop offset="1" stop-color="#f8dc8c"/></linearGradient></defs>
<path d="M0,0 H21 V19 H23.5 V29 H0 Z" fill="url(#fb8)"/>
<path d="M0,0 L8,6.5 V34 L0,28.5 Z" fill="url(#ff8)"/></svg>
<div class="t" style="left:1055.0px;top:602.5px;font-size:29px;line-height:29px;color:#000;transform:scaleX(1.0061);transform-origin:0 0;">Apps</div>
<div class="t" style="left:1617.5px;top:602.5px;font-size:29px;line-height:29px;color:#6d6d6d;transform:scaleX(0.9730);transform-origin:0 0;">2016. 07. 12. 23:59</div>
<div class="t" style="left:1916.5px;top:602.5px;font-size:29px;line-height:29px;color:#6d6d6d;transform:scaleX(0.9962);transform-origin:0 0;">Fájlmappa</div>
<svg style="position:absolute;left:1011px;top:650px" width="24" height="34" viewBox="0 0 24 34"><defs><linearGradient id="fb9" x1="0" x2="1"><stop offset="0" stop-color="#f0c860"/><stop offset="1" stop-color="#fcdc84"/></linearGradient>
<linearGradient id="ff9" x1="0" x2="1"><stop offset="0" stop-color="#fdeaa8"/><stop offset="1" stop-color="#f8dc8c"/></linearGradient></defs>
<path d="M0,0 H21 V19 H23.5 V29 H0 Z" fill="url(#fb9)"/>
<path d="M0,0 L8,6.5 V34 L0,28.5 Z" fill="url(#ff9)"/></svg>
<div class="t" style="left:1052.9px;top:655.5px;font-size:29px;line-height:29px;color:#000;transform:scaleX(1.0400);transform-origin:0 0;">backup</div>
<div class="t" style="left:1617.5px;top:655.5px;font-size:29px;line-height:29px;color:#6d6d6d;transform:scaleX(0.9730);transform-origin:0 0;">2016. 07. 12. 23:59</div>
<div class="t" style="left:1916.5px;top:655.5px;font-size:29px;line-height:29px;color:#6d6d6d;transform:scaleX(0.9962);transform-origin:0 0;">Fájlmappa</div>
<svg style="position:absolute;left:1011px;top:703px" width="24" height="34" viewBox="0 0 24 34"><defs><linearGradient id="fb10" x1="0" x2="1"><stop offset="0" stop-color="#f0c860"/><stop offset="1" stop-color="#fcdc84"/></linearGradient>
<linearGradient id="ff10" x1="0" x2="1"><stop offset="0" stop-color="#fdeaa8"/><stop offset="1" stop-color="#f8dc8c"/></linearGradient></defs>
<path d="M0,0 H21 V19 H23.5 V29 H0 Z" fill="url(#fb10)"/>
<path d="M0,0 L8,6.5 V34 L0,28.5 Z" fill="url(#ff10)"/></svg>
<div class="t" style="left:1053.0px;top:708.5px;font-size:29px;line-height:29px;color:#000;transform:scaleX(0.9979);transform-origin:0 0;">Dell</div>
<div class="t" style="left:1617.5px;top:708.5px;font-size:29px;line-height:29px;color:#6d6d6d;transform:scaleX(0.9730);transform-origin:0 0;">2016. 07. 12. 23:59</div>
<div class="t" style="left:1916.5px;top:708.5px;font-size:29px;line-height:29px;color:#6d6d6d;transform:scaleX(0.9962);transform-origin:0 0;">Fájlmappa</div>
<svg style="position:absolute;left:1011px;top:756px" width="24" height="34" viewBox="0 0 24 34"><defs><linearGradient id="fb11" x1="0" x2="1"><stop offset="0" stop-color="#f0c860"/><stop offset="1" stop-color="#fcdc84"/></linearGradient>
<linearGradient id="ff11" x1="0" x2="1"><stop offset="0" stop-color="#fdeaa8"/><stop offset="1" stop-color="#f8dc8c"/></linearGradient></defs>
<path d="M0,0 H21 V19 H23.5 V29 H0 Z" fill="url(#fb11)"/>
<path d="M0,0 L8,6.5 V34 L0,28.5 Z" fill="url(#ff11)"/></svg>
<div class="t" style="left:1053.0px;top:761.5px;font-size:29px;line-height:29px;color:#000;transform:scaleX(0.9831);transform-origin:0 0;">Drivers</div>
<div class="t" style="left:1617.5px;top:761.5px;font-size:29px;line-height:29px;color:#6d6d6d;transform:scaleX(0.9730);transform-origin:0 0;">2016. 07. 12. 23:59</div>
<div class="t" style="left:1916.5px;top:761.5px;font-size:29px;line-height:29px;color:#6d6d6d;transform:scaleX(0.9962);transform-origin:0 0;">Fájlmappa</div>
<svg style="position:absolute;left:1011px;top:809px" width="24" height="34" viewBox="0 0 24 34"><defs><linearGradient id="fb12" x1="0" x2="1"><stop offset="0" stop-color="#f0c860"/><stop offset="1" stop-color="#fcdc84"/></linearGradient>
<linearGradient id="ff12" x1="0" x2="1"><stop offset="0" stop-color="#fdeaa8"/><stop offset="1" stop-color="#f8dc8c"/></linearGradient></defs>
<path d="M0,0 H21 V19 H23.5 V29 H0 Z" fill="url(#fb12)"/>
<path d="M0,0 L8,6.5 V34 L0,28.5 Z" fill="url(#ff12)"/></svg>
<div class="t" style="left:1053.0px;top:814.5px;font-size:29px;line-height:29px;color:#000;transform:scaleX(0.9970);transform-origin:0 0;">Felhasználók</div>
<div class="t" style="left:1617.5px;top:814.5px;font-size:29px;line-height:29px;color:#6d6d6d;transform:scaleX(0.9730);transform-origin:0 0;">2016. 09. 01. 10:27</div>
<div class="t" style="left:1916.5px;top:814.5px;font-size:29px;line-height:29px;color:#6d6d6d;transform:scaleX(0.9962);transform-origin:0 0;">Fájlmappa</div>
<svg style="position:absolute;left:1011px;top:862px" width="24" height="34" viewBox="0 0 24 34"><defs><linearGradient id="fb13" x1="0" x2="1"><stop offset="0" stop-color="#f0c860"/><stop offset="1" stop-color="#fcdc84"/></linearGradient>
<linearGradient id="ff13" x1="0" x2="1"><stop offset="0" stop-color="#fdeaa8"/><stop offset="1" stop-color="#f8dc8c"/></linearGradient></defs>
<path d="M0,0 H21 V19 H23.5 V29 H0 Z" fill="url(#fb13)"/>
<path d="M0,0 L8,6.5 V34 L0,28.5 Z" fill="url(#ff13)"/></svg>
<div class="t" style="left:1051.7px;top:867.5px;font-size:29px;line-height:29px;color:#000;transform:scaleX(1.0960);transform-origin:0 0;">Intel</div>
<div class="t" style="left:1617.5px;top:867.5px;font-size:29px;line-height:29px;color:#6d6d6d;transform:scaleX(0.9730);transform-origin:0 0;">2016. 07. 12. 23:59</div>
<div class="t" style="left:1916.5px;top:867.5px;font-size:29px;line-height:29px;color:#6d6d6d;transform:scaleX(0.9962);transform-origin:0 0;">Fájlmappa</div>
<svg style="position:absolute;left:1011px;top:915px" width="24" height="34" viewBox="0 0 24 34"><defs><linearGradient id="fb14" x1="0" x2="1"><stop offset="0" stop-color="#f0c860"/><stop offset="1" stop-color="#fcdc84"/></linearGradient>
<linearGradient id="ff14" x1="0" x2="1"><stop offset="0" stop-color="#fdeaa8"/><stop offset="1" stop-color="#f8dc8c"/></linearGradient></defs>
<path d="M0,0 H21 V19 H23.5 V29 H0 Z" fill="url(#fb14)"/>
<path d="M0,0 L8,6.5 V34 L0,28.5 Z" fill="url(#ff14)"/></svg>
<div class="t" style="left:1053.0px;top:920.5px;font-size:29px;line-height:29px;color:#000;transform:scaleX(1.0078);transform-origin:0 0;">langpacks</div>
<div class="t" style="left:1617.5px;top:920.5px;font-size:29px;line-height:29px;color:#6d6d6d;transform:scaleX(0.9730);transform-origin:0 0;">2016. 07. 12. 23:59</div>
<div class="t" style="left:1916.5px;top:920.5px;font-size:29px;line-height:29px;color:#6d6d6d;transform:scaleX(0.9962);transform-origin:0 0;">Fájlmappa</div>
<svg style="position:absolute;left:1011px;top:968px" width="24" height="34" viewBox="0 0 24 34"><defs><linearGradient id="fb15" x1="0" x2="1"><stop offset="0" stop-color="#f0c860"/><stop offset="1" stop-color="#fcdc84"/></linearGradient>
<linearGradient id="ff15" x1="0" x2="1"><stop offset="0" stop-color="#fdeaa8"/><stop offset="1" stop-color="#f8dc8c"/></linearGradient></defs>
<path d="M0,0 H21 V19 H23.5 V29 H0 Z" fill="url(#fb15)"/>
<path d="M0,0 L8,6.5 V34 L0,28.5 Z" fill="url(#ff15)"/></svg>
<div class="t" style="left:1053.0px;top:973.5px;font-size:29px;line-height:29px;color:#000;transform:scaleX(0.9789);transform-origin:0 0;">PerfLogs</div>
<div class="t" style="left:1617.5px;top:973.5px;font-size:29px;line-height:29px;color:#6d6d6d;transform:scaleX(0.9733);transform-origin:0 0;">2016. 07. 13. 0:50</div>
<div class="t" style="left:1916.5px;top:973.5px;font-size:29px;line-height:29px;color:#6d6d6d;transform:scaleX(0.9962);transform-origin:0 0;">Fájlmappa</div>
<svg style="position:absolute;left:1011px;top:1021px" width="24" height="34" viewBox="0 0 24 34"><defs><linearGradient id="fb16" x1="0" x2="1"><stop offset="0" stop-color="#f0c860"/><stop offset="1" stop-color="#fcdc84"/></linearGradient>
<linearGradient id="ff16" x1="0" x2="1"><stop offset="0" stop-color="#fdeaa8"/><stop offset="1" stop-color="#f8dc8c"/></linearGradient></defs>
<path d="M0,0 H21 V19 H23.5 V29 H0 Z" fill="url(#fb16)"/>
<path d="M0,0 L8,6.5 V34 L0,28.5 Z" fill="url(#ff16)"/></svg>
<div class="t" style="left:1053.0px;top:1026.5px;font-size:29px;line-height:29px;color:#000;transform:scaleX(0.9966);transform-origin:0 0;">Program Files</div>
<div class="t" style="left:1617.5px;top:1026.5px;font-size:29px;line-height:29px;color:#6d6d6d;transform:scaleX(0.9730);transform-origin:0 0;">2016. 09. 01. 10:58</div>
<div class="t" style="left:1916.5px;top:1026.5px;font-size:29px;line-height:29px;color:#6d6d6d;transform:scaleX(0.9962);transform-origin:0 0;">Fájlmappa</div>
<svg style="position:absolute;left:1011px;top:1074px" width="24" height="34" viewBox="0 0 24 34"><defs><linearGradient id="fb17" x1="0" x2="1"><stop offset="0" stop-color="#f0c860"/><stop offset="1" stop-color="#fcdc84"/></linearGradient>
<linearGradient id="ff17" x1="0" x2="1"><stop offset="0" stop-color="#fdeaa8"/><stop offset="1" stop-color="#f8dc8c"/></linearGradient></defs>
<path d="M0,0 H21 V19 H23.5 V29 H0 Z" fill="url(#fb17)"/>
<path d="M0,0 L8,6.5 V34 L0,28.5 Z" fill="url(#ff17)"/></svg>
<div class="t" style="left:1053.0px;top:1079.5px;font-size:29px;line-height:29px;color:#000;transform:scaleX(1.0221);transform-origin:0 0;">Programfájlok (x86)</div>
<div class="t" style="left:1617.5px;top:1079.5px;font-size:29px;line-height:29px;color:#6d6d6d;transform:scaleX(0.9730);transform-origin:0 0;">2016. 09. 01. 20:31</div>
<div class="t" style="left:1916.5px;top:1079.5px;font-size:29px;line-height:29px;color:#6d6d6d;transform:scaleX(0.9962);transform-origin:0 0;">Fájlmappa</div>
<svg style="position:absolute;left:1011px;top:1127px" width="24" height="34" viewBox="0 0 24 34"><defs><linearGradient id="fb18" x1="0" x2="1"><stop offset="0" stop-color="#f0c860"/><stop offset="1" stop-color="#fcdc84"/></linearGradient>
<linearGradient id="ff18" x1="0" x2="1"><stop offset="0" stop-color="#fdeaa8"/><stop offset="1" stop-color="#f8dc8c"/></linearGradient></defs>
<path d="M0,0 H21 V19 H23.5 V29 H0 Z" fill="url(#fb18)"/>
<path d="M0,0 L8,6.5 V34 L0,28.5 Z" fill="url(#ff18)"/></svg>
<div class="t" style="left:1053.0px;top:1132.5px;font-size:29px;line-height:29px;color:#000;transform:scaleX(0.9883);transform-origin:0 0;">Recovery</div>
<div class="t" style="left:1617.5px;top:1132.5px;font-size:29px;line-height:29px;color:#6d6d6d;transform:scaleX(0.9733);transform-origin:0 0;">2016. 07. 13. 0:55</div>
<div class="t" style="left:1916.5px;top:1132.5px;font-size:29px;line-height:29px;color:#6d6d6d;transform:scaleX(0.9962);transform-origin:0 0;">Fájlmappa</div>
<div style="position:absolute;left:957px;top:1170px;width:1435px;height:54px;background:#cce8ff;"></div>
<svg style="position:absolute;left:966px;top:1180px" width="34" height="34" viewBox="0 0 34 34"><rect x="1" y="1" width="32" height="32" fill="#fff" stroke="#2b2b2b" stroke-width="2"/><polyline points="6.5,15.5 13.5,22.5 28,8" fill="none" stroke="#333" stroke-width="2"/></svg>
<svg style="position:absolute;left:1011px;top:1180px" width="24" height="34" viewBox="0 0 24 34"><defs><linearGradient id="fb19" x1="0" x2="1"><stop offset="0" stop-color="#f0c860"/><stop offset="1" stop-color="#fcdc84"/></linearGradient>
<linearGradient id="ff19" x1="0" x2="1"><stop offset="0" stop-color="#fdeaa8"/><stop offset="1" stop-color="#f8dc8c"/></linearGradient></defs>
<path d="M0,0 H21 V19 H23.5 V29 H0 Z" fill="url(#fb19)"/>
<path d="M0,0 L8,6.5 V34 L0,28.5 Z" fill="url(#ff19)"/></svg>
<div class="t" style="left:1055.0px;top:1185.5px;font-size:29px;line-height:29px;color:#000;transform:scaleX(1.0148);transform-origin:0 0;">teszt</div>
<div class="t" style="left:1617.5px;top:1185.5px;font-size:29px;line-height:29px;color:#6d6d6d;transform:scaleX(0.9730);transform-origin:0 0;">2016. 09. 01. 20:34</div>
<div class="t" style="left:1916.5px;top:1185.5px;font-size:29px;line-height:29px;color:#6d6d6d;transform:scaleX(0.9962);transform-origin:0 0;">Fájlmappa</div>
<svg style="position:absolute;left:1011px;top:1233px" width="24" height="34" viewBox="0 0 24 34"><defs><linearGradient id="fb20" x1="0" x2="1"><stop offset="0" stop-color="#f0c860"/><stop offset="1" stop-color="#fcdc84"/></linearGradient>
<linearGradient id="ff20" x1="0" x2="1"><stop offset="0" stop-color="#fdeaa8"/><stop offset="1" stop-color="#f8dc8c"/></linearGradient></defs>
<path d="M0,0 H21 V19 H23.5 V29 H0 Z" fill="url(#fb20)"/>
<path d="M0,0 L8,6.5 V34 L0,28.5 Z" fill="url(#ff20)"/></svg>
<div class="t" style="left:1055.0px;top:1238.5px;font-size:29px;line-height:29px;color:#000;transform:scaleX(1.0385);transform-origin:0 0;">Windows</div>
<div class="t" style="left:1617.5px;top:1238.5px;font-size:29px;line-height:29px;color:#6d6d6d;transform:scaleX(0.9730);transform-origin:0 0;">2016. 09. 01. 16:36</div>
<div class="t" style="left:1916.5px;top:1238.5px;font-size:29px;line-height:29px;color:#6d6d6d;transform:scaleX(0.9962);transform-origin:0 0;">Fájlmappa</div>
<svg style="position:absolute;left:1011px;top:1286px" width="24" height="34" viewBox="0 0 24 34"><defs><linearGradient id="fb21" x1="0" x2="1"><stop offset="0" stop-color="#f0c860"/><stop offset="1" stop-color="#fcdc84"/></linearGradient>
<linearGradient id="ff21" x1="0" x2="1"><stop offset="0" stop-color="#fdeaa8"/><stop offset="1" stop-color="#f8dc8c"/></linearGradient></defs>
<path d="M0,0 H21 V19 H23.5 V29 H0 Z" fill="url(#fb21)"/>
<path d="M0,0 L8,6.5 V34 L0,28.5 Z" fill="url(#ff21)"/></svg>
<div class="t" style="left:1055.0px;top:1291.5px;font-size:29px;line-height:29px;color:#000;transform:scaleX(1.0543);transform-origin:0 0;">Windows.old</div>
<div class="t" style="left:1617.5px;top:1291.5px;font-size:29px;line-height:29px;color:#6d6d6d;transform:scaleX(0.9733);transform-origin:0 0;">2016. 07. 13. 0:55</div>
<div class="t" style="left:1916.5px;top:1291.5px;font-size:29px;line-height:29px;color:#6d6d6d;transform:scaleX(0.9962);transform-origin:0 0;">Fájlmappa</div>
<svg style="position:absolute;left:1010px;top:1338px" width="28" height="36" viewBox="0 0 28 36"><path d="M0.5,0.5 H21.5 L27.5,6.5 V35.5 H0.5 Z" fill="#fdfdfd" stroke="#a0a0a0" stroke-width="1"/><path d="M21.5,0.5 V6.5 H27.5" fill="#eee" stroke="#a0a0a0" stroke-width="1"/><g stroke="#b8b8b8" stroke-width="1"><line x1="4" y1="9" x2="24" y2="9"/><line x1="4" y1="12" x2="24" y2="12"/><line x1="4" y1="15" x2="24" y2="15"/><line x1="4" y1="18" x2="24" y2="18"/><line x1="4" y1="21" x2="24" y2="21"/><line x1="4" y1="24" x2="24" y2="24"/><line x1="4" y1="27" x2="24" y2="27"/><line x1="4" y1="30" x2="24" y2="30"/><line x1="4" y1="33" x2="24" y2="33"/></g></svg>
<div class="t" style="left:1053.0px;top:1344.5px;font-size:29px;line-height:29px;color:#000;transform:scaleX(0.9883);transform-origin:0 0;">Recovery</div>
<div class="t" style="left:1617.5px;top:1344.5px;font-size:29px;line-height:29px;color:#6d6d6d;transform:scaleX(0.9733);transform-origin:0 0;">2016. 07. 13. 0:55</div>
<div class="t" style="left:1916.5px;top:1344.5px;font-size:29px;line-height:29px;color:#6d6d6d;transform:scaleX(1.0069);transform-origin:0 0;">Szöveges dokume...</div>
<div class="t" style="left:2323.6px;top:1344.5px;font-size:29px;line-height:29px;color:#6d6d6d;transform:scaleX(0.9180);transform-origin:0 0;">0 KB</div>
<div style="position:absolute;left:957px;top:1382px;width:1435px;height:54px;background:#cce8ff;box-sizing:border-box;border:1px solid #99d1ff;"></div>
<svg style="position:absolute;left:966px;top:1392px" width="34" height="34" viewBox="0 0 34 34"><rect x="1" y="1" width="32" height="32" fill="#fff" stroke="#2b2b2b" stroke-width="2"/><polyline points="6.5,15.5 13.5,22.5 28,8" fill="none" stroke="#333" stroke-width="2"/></svg>
<svg style="position:absolute;left:1011px;top:1392px" width="24" height="34" viewBox="0 0 24 34"><defs><linearGradient id="fb22" x1="0" x2="1"><stop offset="0" stop-color="#f0c860"/><stop offset="1" stop-color="#fcdc84"/></linearGradient>
<linearGradient id="ff22" x1="0" x2="1"><stop offset="0" stop-color="#fdeaa8"/><stop offset="1" stop-color="#f8dc8c"/></linearGradient></defs>
<path d="M0,0 H21 V19 H23.5 V29 H0 Z" fill="url(#fb22)"/>
<path d="M0,0 L8,6.5 V34 L0,28.5 Z" fill="url(#ff22)"/></svg>
<div class="t" style="left:1054.0px;top:1397.5px;font-size:29px;line-height:29px;color:#000;transform:scaleX(1.0389);transform-origin:0 0;">cobain backup</div>
<div class="t" style="left:1617.5px;top:1397.5px;font-size:29px;line-height:29px;color:#6d6d6d;transform:scaleX(0.9730);transform-origin:0 0;">2016. 09. 01. 20:34</div>
<div class="t" style="left:1916.5px;top:1397.5px;font-size:29px;line-height:29px;color:#6d6d6d;transform:scaleX(0.9962);transform-origin:0 0;">Fájlmappa</div>
<div class="t" style="left:557.6px;top:1733.1px;font-size:29px;line-height:29px;color:#1e395b;transform:scaleX(1.0384);transform-origin:0 0;">16 elem</div>
<div style="position:absolute;left:690px;top:1730px;width:1px;height:29px;background:#e2e2e2"></div>
<div class="t" style="left:716.9px;top:1733.1px;font-size:29px;line-height:29px;color:#1e395b;transform:scaleX(1.0607);transform-origin:0 0;">2 kijelölt elem</div>
<div style="position:absolute;left:929px;top:1730px;width:1px;height:29px;background:#e2e2e2"></div>
<div style="position:absolute;left:3219px;top:1716px;width:55px;height:58px;box-sizing:border-box;border:2px solid #26a0da;background:#cce8f7;"></div>
<svg style="position:absolute;left:3231px;top:1730px" width="36" height="32" viewBox="0 0 36 32"><g fill="#fff" stroke="#888" stroke-width="1"><rect x="1" y="1" width="6" height="6"/><rect x="1" y="7" width="6" height="6"/><rect x="1" y="13" width="6" height="6"/><rect x="1" y="19" width="6" height="6"/><rect x="1" y="25" width="6" height="6"/></g><g stroke="#777" stroke-width="1.2"><line x1="10" y1="4" x2="22" y2="4"/><line x1="24" y1="4" x2="35" y2="4"/><line x1="10" y1="10" x2="22" y2="10"/><line x1="24" y1="10" x2="35" y2="10"/><line x1="10" y1="16" x2="22" y2="16"/><line x1="24" y1="16" x2="35" y2="16"/><line x1="10" y1="22" x2="22" y2="22"/><line x1="24" y1="22" x2="35" y2="22"/><line x1="10" y1="28" x2="22" y2="28"/><line x1="24" y1="28" x2="35" y2="28"/></g></svg>
<svg style="position:absolute;left:3281px;top:1729px" width="36" height="27" viewBox="0 0 36 27"><rect x="0.5" y="0.5" width="35" height="26" fill="#fff" stroke="#999"/><rect x="2" y="2" width="32" height="23" fill="#6fa8e8"/><path d="M2,11 Q12,12 20,18 L34,19 V25 H2Z" fill="#3e7a4f"/><rect x="2" y="19" width="32" height="6" fill="#5080b0"/></svg>
<div style="position:absolute;left:0px;top:2060px;width:3840px;height:100px;background:#010409"></div>
<div style="position:absolute;left:490px;top:2060px;width:121px;height:100px;background:#333539"></div>
<div style="position:absolute;left:490px;top:2155px;width:121px;height:5px;background:#76b9ed"></div>
<div style="position:absolute;left:748px;top:2155px;width:101px;height:5px;background:#76b9ed"></div>
<div style="position:absolute;left:872px;top:2155px;width:101px;height:5px;background:#76b9ed"></div>
<svg style="position:absolute;left:40px;top:2090px" width="40" height="40" viewBox="0 0 40 40"><g fill="#fff"><polygon points="0,5.5 16.5,3.3 16.5,19 0,19"/><polygon points="18.5,3 40,0 40,19 18.5,19"/><polygon points="0,21 16.5,21 16.5,36.7 0,34.5"/><polygon points="18.5,21 40,21 40,40 18.5,37"/></g></svg>
<svg style="position:absolute;left:158px;top:2088px" width="44" height="44" viewBox="0 0 44 44"><circle cx="28" cy="16" r="13" fill="none" stroke="#fff" stroke-width="2"/><line x1="18.5" y1="25.5" x2="2" y2="42" stroke="#fff" stroke-width="2"/></svg>
<svg style="position:absolute;left:274px;top:2090px" width="52" height="40" viewBox="0 0 52 40"><rect x="11.5" y="2.5" width="29" height="34" fill="none" stroke="#fff" stroke-width="2"/><polyline points="6.5,9 2.5,9 2.5,31 6.5,31" fill="none" stroke="#fff" stroke-width="2"/><polyline points="45.5,9 49.5,9 49.5,31 45.5,31" fill="none" stroke="#fff" stroke-width="2"/></svg>
<svg style="position:absolute;left:390px;top:2075px" width="70" height="70" viewBox="0 0 70 70"><path fill-rule="evenodd" d="M10.9,31.8 C15,20 25,9 35.3,8.2 C49,7.5 60,17 59.8,31 V40 H27.2 C28,47 32,50.5 38,50.5 C45,50.5 51,49 55.5,46.2 V57.8 C51,60.5 45,61.5 39,61.3 C25,61 16.5,52 16.7,40 C16.8,31 22,24 29.9,21.7 C22,22.5 15,27 10.9,31.8 Z M27.2,29.1 H44.6 C44.6,22.5 41,19 35.7,19 C30.5,19 27.5,23 27.2,29.1 Z" fill="#0078d7"/></svg>
<svg style="position:absolute;left:520px;top:2080px" width="70" height="60" viewBox="0 0 70 60"><defs><linearGradient id="exb" x1="0" y1="0" x2="1" y2="1"><stop offset="0" stop-color="#ffe9a0"/><stop offset=".6" stop-color="#fde08a"/><stop offset="1" stop-color="#f5c63e"/></linearGradient>
<linearGradient id="exl" x1="0" y1="0" x2="1" y2="1"><stop offset="0" stop-color="#7ed8f8"/><stop offset=".4" stop-color="#1ec0f2"/><stop offset="1" stop-color="#00b2ee"/></linearGradient></defs>
<path d="M4,10.8 Q4,7.8 7,7.8 H24.5 L28.4,11.7 H53 Q56,11.7 56,14.7 V46.3 Q56,49.3 53,49.3 H7 Q4,49.3 4,46.3 Z" fill="url(#exb)"/>
<path d="M4,10.8 Q4,7.8 7,7.8 H24.5 L28.4,11.7 L24.5,16.7 H4 Z" fill="#f8c93a"/>
<rect x="7.4" y="10.9" width="10.6" height="2.3" fill="#fff"/><circle cx="8.3" cy="12" r="1.4" fill="#1eb4f0"/>
<path d="M12.5,51.7 V34 Q12.5,30 16.5,30 H43.4 Q47.4,30 47.4,34 V51.7 H38.9 V38.9 H21 V51.7 Z" fill="url(#exl)"/></svg>
<svg style="position:absolute;left:630px;top:2070px" width="80" height="80" viewBox="0 0 80 80"><g fill="none" stroke="#fff" stroke-width="1.8"><path d="M26.8,25 C26,16 30,10.5 37,10.5 C43,10.5 47,13.5 48,19"/><path d="M33,23.5 C33,16 36.5,12 41,12.2 C46,12.5 50,15 53,20"/></g><polygon points="17.3,26.3 58.9,18.6 69.8,23.1 69.8,66.6 58.9,69.8 17.3,61.5" fill="#fff"/><g fill="#000"><polygon points="26.3,35 35.9,33.8 35.9,43.6 26.3,43.6"/><polygon points="37.8,33.5 50,32 50,43.6 37.8,43.6"/><polygon points="26.3,44.8 35.9,44.8 35.9,55 26.3,54"/><polygon points="37.8,44.8 50,44.8 50,56.5 37.8,55.2"/></g></svg>
<svg style="position:absolute;left:769px;top:2080px" width="58" height="58" viewBox="3 3 114 114">
<defs><radialGradient id="ffgt" cx=".38" cy=".22" r=".85"><stop offset="0" stop-color="#45b8ec"/><stop offset=".45" stop-color="#1a6ab8"/><stop offset="1" stop-color="#0b1e58"/></radialGradient>
<linearGradient id="ffot" x1="0" y1="0" x2="1" y2="1"><stop offset="0" stop-color="#f08a22"/><stop offset=".55" stop-color="#dc4a1a"/><stop offset="1" stop-color="#e8741e"/></linearGradient>
<linearGradient id="ffyt" x1="0" y1="0" x2="0" y2="1"><stop offset="0" stop-color="#ffffff"/><stop offset=".35" stop-color="#ffe04a"/><stop offset="1" stop-color="#f59a1e"/></linearGradient></defs>
<circle cx="58" cy="47" r="41" fill="url(#ffgt)"/>
<path d="M15.7,17.4 L21,27 C30,24 40,22 49.7,20.7 C46,26 43,31 43.5,35 C50,35.5 55,36.5 58,38.5 C55,44 50,47.5 45.5,48 C46.5,51 47,54.5 46,57 C39,57 32,61 30.5,66 C33,74 42,78.5 52,77.5 C61,76.5 67,71 71.2,70.4 C66,79 58,84.5 49,84.5 C42,84.5 44,87 52,89 C70,92 86,84 94,70 C100,58 101,44 97,30 C107,40 113,54 112,68 C110,94 88,114 60,114 C30,114 6,92 5,62 C5,46 9,32 15.7,17.4 Z" fill="url(#ffot)"/>
<path d="M82,13 C98,22 110,38 110,60 C110,75 104,86 96,94 C102,80 104,66 100,50 C97,36 90,24 82,13 Z" fill="url(#ffyt)"/>
<path d="M44,41 C48,40 54,41 57,39 C55,43 50,46 45,46 Z" fill="#f6d0b0"/>
</svg>
<svg style="position:absolute;left:630px;top:2070px" width="330" height="80" viewBox="0 0 330 80"><defs><linearGradient id="pal" x1="0" y1="0" x2="1" y2="1"><stop offset="0" stop-color="#e6f2fa"/><stop offset="1" stop-color="#a8cfe8"/></linearGradient></defs>
<path d="M266,52 C262,44 266,32 278,25 C292,17 310,18 314,30 C318,42 310,56 300,60 C292,63 284,62 282,58 C280,53 276,52 272,56 C268,59 266,56 266,52 Z" fill="url(#pal)"/>
<circle cx="285.7" cy="44.8" r="2.8" fill="#010409"/>
<circle cx="273" cy="41.8" r="3.6" fill="#e83a30"/><circle cx="280.6" cy="33" r="3.6" fill="#3cb83a"/><circle cx="292.7" cy="29" r="3.8" fill="#f4a21e"/>
<line x1="289.5" y1="66" x2="312" y2="24" stroke="#e07a1e" stroke-width="3.4" stroke-linecap="round"/>
<line x1="312" y1="24" x2="315.5" y2="18" stroke="#b8b8b8" stroke-width="3.2"/>
<path d="M313,19 L308,13 Q314,9 319,12 L321,17 Z" fill="#d8b078"/></svg>
<svg style="position:absolute;left:3145px;top:2098px" width="33" height="19" viewBox="0 0 33 19"><polyline points="1,18 16.5,2 32,18" fill="none" stroke="#fff" stroke-width="2"/></svg>
<svg style="position:absolute;left:3222px;top:2099px" width="40" height="24" viewBox="0 0 40 24"><rect x="1" y="1" width="34" height="21" fill="none" stroke="#fff" stroke-width="2"/><rect x="5" y="5" width="22" height="13" fill="#fff"/><rect x="35" y="7" width="4" height="9" fill="#fff"/></svg>
<svg style="position:absolute;left:3305px;top:2095px" width="34" height="32" viewBox="0 0 34 32"><path d="M2,31 A29,29 0 0 1 31,2" fill="none" stroke="#fff" stroke-width="2"/><path d="M9,31 A22,22 0 0 1 31,9" fill="none" stroke="#fff" stroke-width="2"/><path d="M16,31 A15,15 0 0 1 31,16" fill="none" stroke="#fff" stroke-width="2"/><circle cx="29" cy="28" r="3.2" fill="#fff"/></svg>
<svg style="position:absolute;left:3380px;top:2091px" width="42" height="38" viewBox="0 0 42 38"><polygon points="1.5,12 9,12 20,3 20,34 9,25 1.5,25" fill="none" stroke="#fff" stroke-width="2"/><path d="M25,14 Q28,18.5 25,23" fill="none" stroke="#fff" stroke-width="2"/><path d="M30,8 Q36,18.5 30,29" fill="none" stroke="#fff" stroke-width="2"/><path d="M35,2 Q44,18.5 35,35" fill="none" stroke="#fff" stroke-width="2"/></svg>
<svg style="position:absolute;left:3460px;top:2090px" width="41" height="41" viewBox="0 0 41 41"><path d="M0,0 H41 V34 H25 L20.5,40 L16,34 H0 Z" fill="#fff"/><g stroke="#000" stroke-width="2"><line x1="8" y1="9" x2="32" y2="9"/><line x1="8" y1="17" x2="32" y2="17"/><line x1="8" y1="25" x2="24" y2="25"/></g></svg>
<svg style="position:absolute;left:3535px;top:2089px" width="71" height="41" viewBox="0 0 71 41"><rect x="1.5" y="1.5" width="68" height="38" rx="2" fill="none" stroke="#fff" stroke-width="2.5"/><g fill="#fff"><rect x="9" y="9" width="4" height="4"/><rect x="17" y="9" width="4" height="4"/><rect x="25" y="9" width="4" height="4"/><rect x="33" y="9" width="4" height="4"/><rect x="41" y="9" width="4" height="4"/><rect x="49" y="9" width="4" height="4"/><rect x="57" y="9" width="4" height="4"/><rect x="9" y="18" width="7" height="4"/><rect x="20" y="18" width="4" height="4"/><rect x="28" y="18" width="4" height="4"/><rect x="36" y="18" width="4" height="4"/><rect x="44" y="18" width="4" height="4"/><rect x="52" y="18" width="10" height="4"/><rect x="9" y="27" width="7" height="4"/><rect x="20" y="27" width="30" height="4"/><rect x="54" y="27" width="8" height="4"/></g></svg>
<div class="t" style="left:3688.0px;top:2073.8px;font-size:28px;line-height:28px;color:#fff;transform:scaleX(1.0000);transform-origin:0 0;">20:34</div>
<div class="t" style="left:3641.0px;top:2116.8px;font-size:28px;line-height:28px;color:#fff;transform:scaleX(1.0188);transform-origin:0 0;">2016. 09. 01.</div>
<div style="position:absolute;left:3827px;top:2060px;width:2px;height:100px;background:#5a5a5a"></div>
</body></html>
